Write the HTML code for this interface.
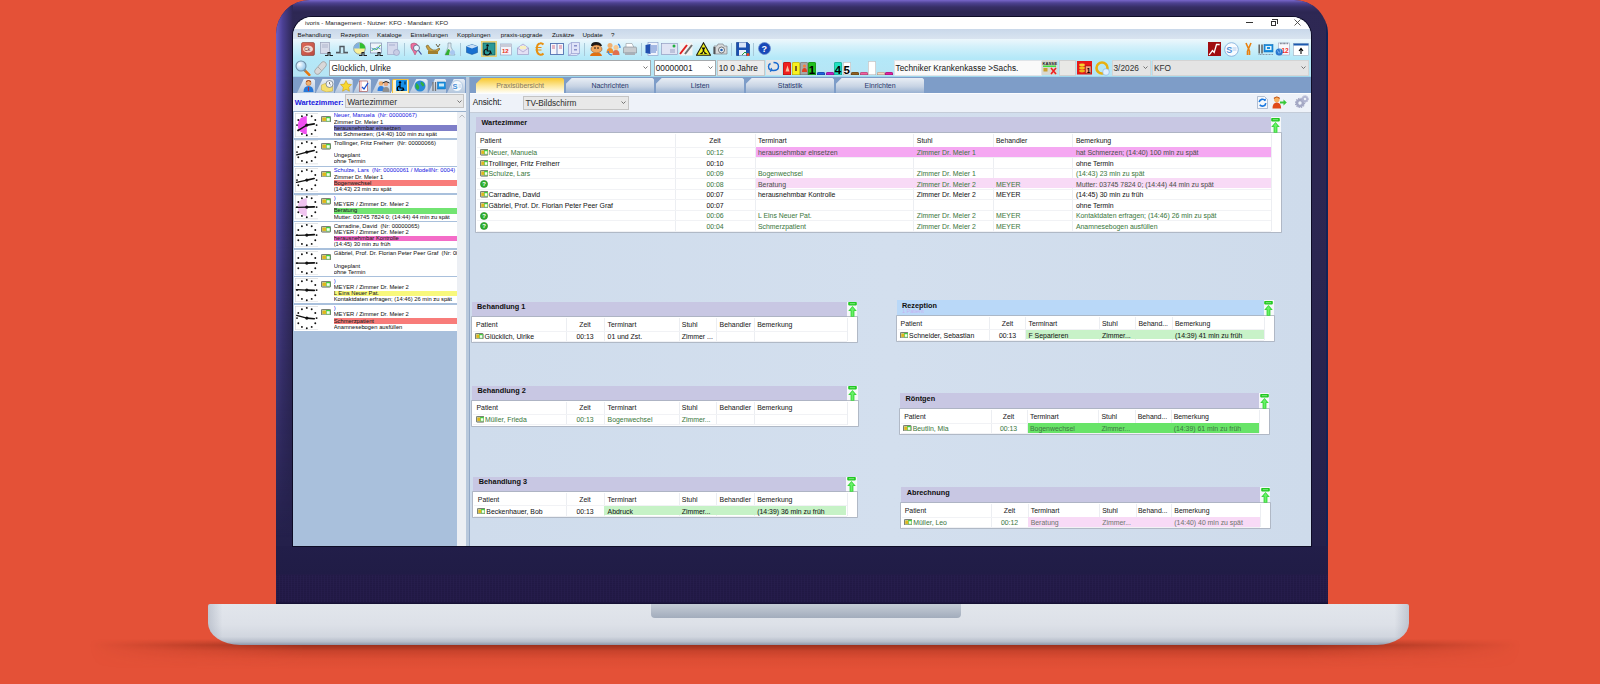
<!DOCTYPE html>
<html><head><meta charset="utf-8"><title>ivoris</title>
<style>*{margin:0;padding:0;box-sizing:border-box}
html,body{width:1600px;height:684px;overflow:hidden;background:#e45137;font-family:"Liberation Sans",sans-serif}
.a{position:absolute}
.t{position:absolute;white-space:pre;-webkit-text-stroke:0.04px currentColor}
#shadow{left:90px;top:639px;width:1430px;height:30px;background:linear-gradient(rgba(105,25,10,0),rgba(105,25,10,.6) 6px,rgba(135,35,18,.3) 12px,rgba(160,45,25,.1) 20px,rgba(0,0,0,0));-webkit-mask-image:linear-gradient(90deg,transparent,#000 15%,#000 85%,transparent)}
#bezel{left:276px;top:0;width:1052px;height:605px;border-radius:34px 34px 0 0;background:linear-gradient(#2e2854,#2b2651 45%,#24204b 90%);overflow:hidden}
#bzl{left:0;top:0;width:17px;height:560px;background:linear-gradient(90deg,#6e5ec6,#4a3f92 40%,#2d2753);-webkit-mask-image:linear-gradient(#000,#000 12%,rgba(0,0,0,.6) 45%,rgba(0,0,0,.2) 78%,transparent 96%)}
#bzt{left:0;top:0;width:1052px;height:14px;background:linear-gradient(#7866ca,#4d4290 3px,#372f66 7px,#2d2753 12px)}
#bzr{right:0;top:0;width:2px;height:560px;background:#122256}
#bezlow{left:276px;top:546px;width:1052px;height:58px;background:linear-gradient(#221e49,#201c46 48%,#241c49 50%,#221a46 96%,#120e30)}
#bztex{left:276px;top:575px;width:1052px;height:27px;opacity:.2;background:repeating-linear-gradient(90deg,rgba(70,50,120,.5) 0 1px,transparent 1px 3px),repeating-linear-gradient(0deg,rgba(20,10,50,.6) 0 1px,transparent 1px 2px)}
#base{left:208px;top:604px;width:1201px;height:41px;border-radius:2px 2px 32px 32px/2px 2px 22px 22px;background:linear-gradient(90deg,rgba(120,130,150,.3),transparent 1.2%,transparent 98.8%,rgba(120,130,150,.3)),linear-gradient(#e2e6ec,#dde1e8 50%,#d1d6df 80%,#b6bdca 92%,#8e97aa)}
#notch{left:651px;top:604px;width:310px;height:14px;border-radius:0 0 4px 4px;background:linear-gradient(#c5ccd6,#a2acbc)}
#screen{left:293px;top:16.8px;width:1018px;height:529.2px;border-radius:19px 19px 0 0;overflow:hidden;background:#cfdcec;box-shadow:0 0 0 1px #0e0c26}
#inner{position:absolute;left:-293px;top:-16.8px;width:1600px;height:684px}
</style></head><body>
<div id="shadow" class="a"></div>
<div id="bezel" class="a"><div id="bzt" class="a"></div><div id="bzl" class="a"></div><div id="bzr" class="a"></div></div>
<div id="bezlow" class="a"></div><div id="bztex" class="a"></div>
<div id="base" class="a"></div>
<div id="notch" class="a"></div>
<div id="screen" class="a"><div id="inner">
<div class="a" style="left:293px;top:16px;width:1018px;height:13px;background:#fff"></div>
<div class="t" style="left:305px;top:20.30px;font-size:6.25px;line-height:6.25px;color:#222;-webkit-text-stroke:0;">ivoris - Management - Nutzer: KFO - Mandant: KFO</div>
<div class="a" style="left:1246px;top:22px;width:7px;height:1px;background:#333"></div>
<div class="a" style="left:1270.5px;top:20.5px;width:5.5px;height:5px;border:1px solid #333;background:#fff"></div>
<div class="a" style="left:1272px;top:19px;width:5.5px;height:5px;border:1px solid #333;border-left:none;border-bottom:none"></div>
<svg class="a" style="left:1294px;top:19px" width="7" height="7"><path d="M0.5 0.5L6.5 6.5M6.5 0.5L0.5 6.5" stroke="#444" stroke-width="0.9"/></svg>
<div class="a" style="left:293px;top:29px;width:1018px;height:10px;background:linear-gradient(#c9d8ea,#d9e4f0)"></div>
<div class="t" style="left:297.5px;top:31.60px;font-size:6.25px;line-height:6.25px;color:#111;-webkit-text-stroke:0;">Behandlung</div>
<div class="t" style="left:340.5px;top:31.60px;font-size:6.25px;line-height:6.25px;color:#111;-webkit-text-stroke:0;">Rezeption</div>
<div class="t" style="left:377px;top:31.60px;font-size:6.25px;line-height:6.25px;color:#111;-webkit-text-stroke:0;">Kataloge</div>
<div class="t" style="left:410.5px;top:31.60px;font-size:6.25px;line-height:6.25px;color:#111;-webkit-text-stroke:0;">Einstellungen</div>
<div class="t" style="left:457px;top:31.60px;font-size:6.25px;line-height:6.25px;color:#111;-webkit-text-stroke:0;">Kopplungen</div>
<div class="t" style="left:500.7px;top:31.60px;font-size:6.25px;line-height:6.25px;color:#111;-webkit-text-stroke:0;">praxis-upgrade</div>
<div class="t" style="left:552px;top:31.60px;font-size:6.25px;line-height:6.25px;color:#111;-webkit-text-stroke:0;">Zusätze</div>
<div class="t" style="left:582.5px;top:31.60px;font-size:6.25px;line-height:6.25px;color:#111;-webkit-text-stroke:0;">Update</div>
<div class="t" style="left:611px;top:31.60px;font-size:6.25px;line-height:6.25px;color:#111;-webkit-text-stroke:0;">?</div>
<div class="a" style="left:293px;top:39px;width:1018px;height:20px;background:linear-gradient(#edf7fc,#d2f0fa 40%,#b2e8f8)"></div>
<svg class="a" style="left:301px;top:42px;" width="14" height="14" viewBox="0 0 14 14"><defs><linearGradient id="g1" x1="0" y1="0" x2="1" y2="1"><stop offset="0" stop-color="#e06a58"/><stop offset="1" stop-color="#b84a40"/></linearGradient></defs><rect x="0.5" y="0.5" width="13" height="13" rx="1.5" fill="url(#g1)" stroke="#8a3a30" stroke-width="0.6"/><ellipse cx="7" cy="7" rx="5" ry="3.6" fill="#f2d8d0"/><text x="3.2" y="9" font-size="5" font-family="Liberation Sans" fill="#6a2a20">Ck</text></svg>
<svg class="a" style="left:320px;top:42px;" width="13" height="14" viewBox="0 0 13 14"><rect x="0.5" y="0.5" width="9" height="11" fill="#d8dcea" stroke="#9aa0b8" stroke-width="0.7"/><line x1="2" y1="3" x2="8" y2="3" stroke="#a0a8c0" stroke-width="0.7"/><line x1="2" y1="5" x2="8" y2="5" stroke="#a0a8c0" stroke-width="0.7"/><path d="M5 13.5h3v-3h2v3h3" fill="none" stroke="#202020" stroke-width="1.1"/></svg>
<svg class="a" style="left:335px;top:43px;" width="14" height="12" viewBox="0 0 14 12"><path d="M1 9.5h4v-6h4v6h4" fill="none" stroke="#505860" stroke-width="1.4"/><path d="M1 10.5h12" stroke="#90989e" stroke-width="0.6"/></svg>
<svg class="a" style="left:353px;top:42px;" width="14" height="14" viewBox="0 0 14 14"><circle cx="6.5" cy="6.5" r="5.8" fill="#f8f098" stroke="#607080" stroke-width="0.6"/><path d="M6.5 6.5V0.7A5.8 5.8 0 0 1 12.3 6.5Z" fill="#30c030"/><path d="M6.5 6.5H0.7A5.8 5.8 0 0 1 6.5 0.7Z" fill="#80b0e0"/><path d="M6 13.5h3v-3h2v3h3" fill="none" stroke="#202020" stroke-width="1.1"/></svg>
<svg class="a" style="left:370px;top:42px;" width="13" height="14" viewBox="0 0 13 14"><rect x="0.5" y="1" width="11" height="10" fill="#eef4fa" stroke="#7888a8" stroke-width="0.7"/><path d="M1.5 9l3-3 2 2 4-5" fill="none" stroke="#30b030" stroke-width="0.9"/><path d="M1.5 6l3 2 3-3 3 2" fill="none" stroke="#3080e0" stroke-width="0.8"/><path d="M5 13.5h3v-3h2v3h3" fill="none" stroke="#202020" stroke-width="1.1"/></svg>
<svg class="a" style="left:387px;top:42px;" width="13" height="14" viewBox="0 0 13 14"><rect x="0.5" y="0.5" width="10" height="12" fill="#d4d8ec" stroke="#a0a8c8" stroke-width="0.7"/><line x1="2" y1="3" x2="8" y2="3" stroke="#a8b0d0"/><circle cx="9.5" cy="10.5" r="3" fill="#c8cce4" stroke="#9098c0" stroke-width="0.6"/></svg>
<div class="a" style="left:404px;top:43px;width:1px;height:13px;background:#a8c8d8"></div>
<svg class="a" style="left:409px;top:42px;" width="13" height="14" viewBox="0 0 13 14"><path d="M2 2q3-2 6 0q2 3 0 7l-2 4-2-4q-3-3-2-7z" fill="#f070a0" stroke="#a04060" stroke-width="0.5"/><circle cx="7.5" cy="6" r="3" fill="#e8f4ff" stroke="#506080" stroke-width="0.8"/><path d="M9.5 8.5l3 4" stroke="#4050a0" stroke-width="1.2"/></svg>
<svg class="a" style="left:425px;top:42px;" width="16" height="14" viewBox="0 0 16 14"><path d="M1 4q2 6 7 7q5 0 7-4l-1-1q-3 3-6 2q-3-1-5-5z" fill="#c8a040" stroke="#705820" stroke-width="0.6"/><path d="M11 2l2 3 2-3" fill="none" stroke="#605030" stroke-width="0.9"/><rect x="3" y="9" width="10" height="3" fill="#a08030"/></svg>
<svg class="a" style="left:444px;top:42px;" width="12" height="14" viewBox="0 0 12 14"><path d="M4 1h3v4l4 8H1l3-8z" fill="#dce8f0" stroke="#7890a0" stroke-width="0.6"/><path d="M2 11l2-4 2 1-1 5H1z" fill="#30b030"/><circle cx="8.5" cy="10.5" r="2.5" fill="#a8c8f0"/></svg>
<div class="a" style="left:460px;top:43px;width:1px;height:13px;background:#a8c8d8"></div>
<svg class="a" style="left:466px;top:43px;" width="12" height="12" viewBox="0 0 12 12"><path d="M0.5 3.5l5.5-2 5.5 2v6l-5.5 2-5.5-2z" fill="#1870d0" stroke="#0a4a90" stroke-width="0.5"/><path d="M0.5 3.5l5.5 2 5.5-2-5.5-2z" fill="#c8e0f8"/></svg>
<svg class="a" style="left:481px;top:41px;" width="16" height="16" viewBox="0 0 16 16"><rect x="0.5" y="0.5" width="15" height="15" fill="#f8e8a0" stroke="#e8c860" stroke-width="0.8"/><rect x="2" y="2" width="12" height="12" fill="#2a9a98" stroke="#106060" stroke-width="0.8"/><circle cx="6.5" cy="4.5" r="1.2" fill="#101010"/><path d="M6.3 6v4h3l1 3M6 8a3 3 0 1 0 3 3.5" fill="none" stroke="#101010" stroke-width="1.2"/></svg>
<svg class="a" style="left:500px;top:42px;" width="12" height="14" viewBox="0 0 12 14"><rect x="0.5" y="2" width="11" height="11" fill="#f4f4fa" stroke="#9098b8" stroke-width="0.6"/><rect x="0.5" y="2" width="11" height="3" fill="#c8ccd8"/><text x="2" y="11" font-size="6" font-weight="bold" font-family="Liberation Sans" fill="#e83020">12</text></svg>
<svg class="a" style="left:517px;top:43px;" width="12" height="12" viewBox="0 0 12 12"><path d="M0.5 5l5.5-4 5.5 4v6.5h-11z" fill="#e4e0f4" stroke="#9890c0" stroke-width="0.6"/><path d="M0.5 5l5.5 4 5.5-4" fill="none" stroke="#9890c0" stroke-width="0.6"/><rect x="3" y="3" width="6" height="3" fill="#f8f0c0"/></svg>
<svg class="a" style="left:535px;top:42px;" width="10" height="14" viewBox="0 0 10 14"><path d="M8.5 2.5q-1.5-1.5-3.2-1.2q-3.5 0.5-3.5 5.7t3.5 5.7q1.7 0.3 3.2-1.2" fill="none" stroke="#e89010" stroke-width="2"/><path d="M0.5 5.5h6M0.5 8h6" stroke="#e89010" stroke-width="1"/></svg>
<svg class="a" style="left:550px;top:42px;" width="14" height="14" viewBox="0 0 14 14"><rect x="0.5" y="1.5" width="13" height="11" fill="#f4f6fc" stroke="#5070b0" stroke-width="0.9"/><line x1="7" y1="1.5" x2="7" y2="12.5" stroke="#5070b0" stroke-width="0.8"/><path d="M2 4h3M2 6h3M9 4h3M9 6h3" stroke="#c02040" stroke-width="0.6"/></svg>
<svg class="a" style="left:568px;top:42px;" width="12" height="14" viewBox="0 0 12 14"><path d="M0.5 2.5l3-2h8v11l-3 2h-8z" fill="#e0e4f8" stroke="#8890c8" stroke-width="0.6"/><path d="M3.5 0.5v11h8M3.5 11.5l-3 2" fill="none" stroke="#8890c8" stroke-width="0.6"/><rect x="6" y="3" width="3" height="1.5" fill="#8890c8"/><rect x="6" y="7" width="3" height="1.5" fill="#8890c8"/></svg>
<div class="a" style="left:584px;top:43px;width:1px;height:13px;background:#a8c8d8"></div>
<svg class="a" style="left:589px;top:42px;" width="14" height="14" viewBox="0 0 14 14"><path d="M2 4q0-4 5-4q5 0 6 4z" fill="#181818"/><ellipse cx="7.5" cy="7" rx="5.5" ry="4" fill="#f0a860" stroke="#804010" stroke-width="0.5"/><path d="M1 14q1-4 6-3q5-1 6 3z" fill="#e07010"/><circle cx="6" cy="6" r="0.8" fill="#000"/><circle cx="9" cy="6" r="0.8" fill="#000"/></svg>
<svg class="a" style="left:606px;top:42px;" width="15" height="14" viewBox="0 0 15 14"><circle cx="4" cy="3.5" r="2.5" fill="#f0b070"/><path d="M0.5 11q0-5 3.5-5q3.5 0 3.5 5z" fill="#f09030"/><circle cx="10" cy="5.5" r="2.5" fill="#f8c890"/><path d="M6.5 13q0-5 3.5-5q3.5 0 3.5 5z" fill="#e07050"/><path d="M2 9a4 4 0 0 0 4 4M12 2a4 4 0 0 1 2 4" fill="none" stroke="#3080e0" stroke-width="1.2"/></svg>
<svg class="a" style="left:623px;top:43px;" width="14" height="13" viewBox="0 0 14 13"><path d="M3 0.5h6l2 4H3z" fill="#fff" stroke="#9098a0" stroke-width="0.6"/><path d="M0.5 5q0-1 1-1h11q1 0 1 1v5h-13z" fill="#c8ccd0" stroke="#808890" stroke-width="0.6"/><rect x="2" y="9" width="10" height="3" fill="#a8b0b8"/></svg>
<div class="a" style="left:641px;top:43px;width:1px;height:13px;background:#a8c8d8"></div>
<svg class="a" style="left:645px;top:42px;" width="14" height="14" viewBox="0 0 14 14"><rect x="3" y="0.5" width="10" height="13" fill="#f0f4fc" stroke="#8098c8" stroke-width="0.6"/><path d="M0.5 3l5-1v10l-5-1z" fill="#2050b0"/><path d="M6 4h6M6 6h6M6 8h6M6 10h5" stroke="#3060c0" stroke-width="0.8"/></svg>
<svg class="a" style="left:661px;top:43px;" width="17" height="12" viewBox="0 0 17 12"><rect x="0.5" y="0.5" width="16" height="11" fill="#e0e4f4" stroke="#8890b8" stroke-width="0.6"/><circle cx="13" cy="3" r="1.5" fill="#20b040"/><path d="M9 7h5M9 9h5" stroke="#8890b8" stroke-width="0.8"/></svg>
<svg class="a" style="left:679px;top:42px;" width="14" height="14" viewBox="0 0 14 14"><rect x="0.5" y="0.5" width="13" height="13" fill="#f4f4f4"/><path d="M1 12L8 3" stroke="#e02020" stroke-width="2"/><path d="M6 12L13 3" stroke="#707070" stroke-width="2"/></svg>
<svg class="a" style="left:696px;top:42px;" width="15" height="14" viewBox="0 0 15 14"><path d="M7.5 0.8L14.5 13.2H0.5z" fill="#f0f020" stroke="#202010" stroke-width="1.1"/><circle cx="7.5" cy="9" r="1" fill="#000"/><path d="M7.5 9L5.5 5.5h4zM7.5 9l4 3h-3zM7.5 9l-4 3h3z" fill="#101010"/></svg>
<svg class="a" style="left:713px;top:42px;" width="15" height="14" viewBox="0 0 15 14"><path d="M1 4h3l1-2h5l1 2h3v8H1z" fill="#d8dadc" stroke="#707478" stroke-width="0.6"/><circle cx="8.5" cy="8" r="3" fill="#f0f4f8" stroke="#505458" stroke-width="0.8"/><circle cx="8.5" cy="8" r="1.3" fill="#2060b0"/><rect x="0.5" y="5" width="2" height="7" fill="#505458"/></svg>
<div class="a" style="left:731px;top:43px;width:1px;height:13px;background:#a8c8d8"></div>
<svg class="a" style="left:736px;top:42px;" width="14" height="14" viewBox="0 0 14 14"><path d="M0.5 0.5h11l2 2v11h-13z" fill="#1a50b0" stroke="#0a3080" stroke-width="0.6"/><rect x="3" y="0.5" width="7" height="5" fill="#d8e4f8"/><rect x="3" y="8" width="7" height="5.5" fill="#e8eef8"/><path d="M6 13l3-3 3 3" fill="none" stroke="#20a040" stroke-width="1"/><circle cx="12" cy="12.5" r="1.5" fill="#f04020"/></svg>
<div class="a" style="left:753px;top:43px;width:1px;height:13px;background:#a8c8d8"></div>
<svg class="a" style="left:758px;top:42px;" width="13" height="13" viewBox="0 0 13 13"><circle cx="6.5" cy="6.5" r="6" fill="#1848b8" stroke="#7090d0" stroke-width="0.8"/><text x="3.6" y="10" font-size="9" font-weight="bold" font-family="Liberation Sans" fill="#fff">?</text></svg>
<svg class="a" style="left:1208px;top:42px;" width="14" height="14" viewBox="0 0 14 14"><rect x="0" y="0" width="13" height="14" fill="#a00c10"/><path d="M1.2 12.8L4.5 8.5 6.2 10.5 8.5 2.5h3.2" fill="none" stroke="#fff" stroke-width="1.3"/></svg>
<svg class="a" style="left:1224px;top:42px;" width="15" height="15" viewBox="0 0 15 15"><circle cx="7.5" cy="7.5" r="6.8" fill="#f8fbff" stroke="#7aa8d8" stroke-width="0.8"/><text x="2.3" y="11" font-size="9" font-weight="bold" font-family="Liberation Sans" fill="#5090d8">S</text><path d="M8.5 6h4M8.5 8h4" stroke="#a0c0e8" stroke-width="0.8"/></svg>
<svg class="a" style="left:1244px;top:42px;" width="9" height="14" viewBox="0 0 9 14"><path d="M2 1l3.5 8M7 1L3.5 9" stroke="#e88010" stroke-width="1.6"/><path d="M3.5 9v4M5.5 9v4" stroke="#e88010" stroke-width="1.6"/></svg>
<svg class="a" style="left:1258px;top:43px;" width="16" height="13" viewBox="0 0 16 13"><path d="M1.2 1.5v9M4 1.5v9" stroke="#606060" stroke-width="1.5"/><rect x="6" y="1.5" width="9" height="7.5" fill="#1a90e0" stroke="#0a60b0" stroke-width="0.5"/><rect x="7.5" y="3" width="6" height="4" fill="#e0f0fa"/><rect x="9" y="4" width="3" height="2" fill="#1a90e0"/><path d="M0.5 11.5h15" stroke="#8090a0" stroke-width="0.9" stroke-dasharray="1 0.5"/></svg>
<svg class="a" style="left:1275px;top:42px;" width="15" height="14" viewBox="0 0 15 14"><rect x="3.5" y="1" width="11" height="12" fill="#f8f8fc" stroke="#a0a4b8" stroke-width="0.6"/><path d="M5 1.5h8" stroke="#707888" stroke-width="1.4" stroke-dasharray="0.8 0.6"/><text x="6.5" y="10.5" font-size="6.5" font-weight="bold" font-family="Liberation Sans" fill="#f03020">12</text><circle cx="4.2" cy="10" r="3.6" fill="#2a78d0"/><path d="M2 8.5q2 1 2 3M5 7q1 2 0 4" fill="none" stroke="#a0d0f8" stroke-width="0.7"/></svg>
<svg class="a" style="left:1293px;top:43px;" width="16" height="13" viewBox="0 0 16 13"><rect x="0.5" y="0.5" width="15" height="12" fill="#fff" stroke="#a0b0c0" stroke-width="0.6"/><rect x="0.5" y="0.5" width="15" height="2" fill="#1a5ab0"/><path d="M8 11V6M6 8l2-2.5 2 2.5" fill="none" stroke="#000" stroke-width="1.1"/></svg>
<div class="a" style="left:293px;top:58.5px;width:1018px;height:18.5px;background:linear-gradient(#b4e8f8,#b6e4f4)"></div>
<div class="a" style="left:293px;top:76px;width:1018px;height:1.2px;background:#9fd6ec"></div>
<svg class="a" style="left:295px;top:60px;" width="16" height="16" viewBox="0 0 16 16"><defs><radialGradient id="mg" cx="0.35" cy="0.35" r="0.7"><stop offset="0" stop-color="#ffffff"/><stop offset="1" stop-color="#8cc4ec"/></radialGradient></defs><path d="M9.3 9.8l5 5" stroke="#e8780c" stroke-width="2.6" stroke-linecap="round"/><path d="M9 9.5l1.6 1.6" stroke="#808890" stroke-width="2.2"/><circle cx="6" cy="6" r="5" fill="url(#mg)" stroke="#7090a8" stroke-width="1.1"/></svg>
<svg class="a" style="left:313px;top:60px;" width="15" height="15" viewBox="0 0 15 15"><path d="M2 10l7-8q2-1 3.5 0.5t0.5 3.5l-7 8q-2 1-3.5-0.5T2 10z" fill="#d8d8d8" stroke="#a0a0a0" stroke-width="0.8"/><path d="M5 7l3.5 3.5" stroke="#a0a0a0" stroke-width="0.8"/></svg>
<div class="a" style="left:329px;top:60px;width:322px;height:15.5px;background:#fff;border:1px solid #a4a8ac"></div>
<svg class="a" style="left:643px;top:66.25px;" width="5" height="3" viewBox="0 0 5 3"><path d="M0.5 0.5L2.5 2.5L4.5 0.5" fill="none" stroke="#555" stroke-width="0.8"/></svg>
<div class="t" style="left:331.5px;top:63.80px;font-size:8.3px;line-height:8.3px;color:#222;">Glücklich, Ulrike</div>
<div class="a" style="left:654px;top:60px;width:62px;height:15.5px;background:#fff;border:1px solid #a4a8ac"></div>
<svg class="a" style="left:708px;top:66.25px;" width="5" height="3" viewBox="0 0 5 3"><path d="M0.5 0.5L2.5 2.5L4.5 0.5" fill="none" stroke="#555" stroke-width="0.8"/></svg>
<div class="t" style="left:655.7px;top:63.80px;font-size:8.3px;line-height:8.3px;color:#222;">00000001</div>
<div class="a" style="left:717px;top:60px;width:48px;height:15.5px;background:#ececec;border:1px solid #c8c8c8"></div>
<div class="t" style="left:718.7px;top:63.80px;font-size:8.3px;line-height:8.3px;color:#222;">10 0 Jahre</div>
<div class="a" style="left:765.5px;top:59.5px;width:16px;height:15.5px;background:#e6e6e6"></div>
<svg class="a" style="left:767px;top:61px;" width="13" height="12" viewBox="0 0 13 12"><path d="M6.5 1.5q5 0 5 4t-5 4q-5 0-5-4 0-2 2-3" fill="none" stroke="#1a6ad0" stroke-width="1.4"/><path d="M3 10.5l2-1.5-1-2" fill="none" stroke="#1a6ad0" stroke-width="1.2"/></svg>
<div class="a" style="left:783px;top:62px;width:8px;height:12.8px;background:#f02020;border-radius:1.5px 1.5px 0 0;box-shadow:inset 0 0 0 0.5px rgba(0,0,0,.35)"></div>
<div class="a" style="left:792px;top:62px;width:7.5px;height:12.8px;background:#f8f020;border-radius:1.5px 1.5px 0 0;box-shadow:inset 0 0 0 0.5px rgba(0,0,0,.35)"></div>
<div class="a" style="left:800px;top:62px;width:7.5px;height:12.8px;background:#a8a8a8;border-radius:1.5px 1.5px 0 0;box-shadow:inset 0 0 0 0.5px rgba(0,0,0,.35)"></div>
<div class="a" style="left:808px;top:62px;width:8px;height:12.8px;background:#20c020;border-radius:1.5px 1.5px 0 0;box-shadow:inset 0 0 0 0.5px rgba(0,0,0,.35)"></div>
<div class="t" style="left:808px;width:8px;text-align:center;top:65.20px;font-size:11.5px;line-height:11.5px;font-weight:bold;color:#000">1</div>
<div class="a" style="left:817px;top:72px;width:8px;height:2.8px;background:#2060e0;border-radius:1.5px 1.5px 0 0;box-shadow:inset 0 0 0 0.5px rgba(0,0,0,.35)"></div>
<div class="a" style="left:826px;top:72px;width:7.5px;height:2.8px;background:#c020c0;border-radius:1.5px 1.5px 0 0;box-shadow:inset 0 0 0 0.5px rgba(0,0,0,.35)"></div>
<div class="a" style="left:834px;top:62px;width:8px;height:12.8px;background:#20e0c0;border-radius:1.5px 1.5px 0 0;box-shadow:inset 0 0 0 0.5px rgba(0,0,0,.35)"></div>
<div class="t" style="left:834px;width:8px;text-align:center;top:65.20px;font-size:11.5px;line-height:11.5px;font-weight:bold;color:#000">4</div>
<div class="a" style="left:843px;top:62px;width:7.5px;height:12.8px;background:#ffffff;border-radius:1.5px 1.5px 0 0;box-shadow:inset 0 0 0 0.5px rgba(0,0,0,.35)"></div>
<div class="t" style="left:843px;width:7.5px;text-align:center;top:65.20px;font-size:11.5px;line-height:11.5px;font-weight:bold;color:#000">5</div>
<div class="a" style="left:851px;top:72px;width:8px;height:2.8px;background:#906020;border-radius:1.5px 1.5px 0 0;box-shadow:inset 0 0 0 0.5px rgba(0,0,0,.35)"></div>
<div class="a" style="left:860px;top:72px;width:7.5px;height:2.8px;background:#f060a0;border-radius:1.5px 1.5px 0 0;box-shadow:inset 0 0 0 0.5px rgba(0,0,0,.35)"></div>
<div class="a" style="left:868px;top:61px;width:7.5px;height:13.8px;background:#ffffff;border-radius:1.5px 1.5px 0 0;box-shadow:inset 0 0 0 0.5px rgba(0,0,0,.35)"></div>
<div class="a" style="left:877px;top:72px;width:7.5px;height:2.8px;background:#f8d8c0;border-radius:1.5px 1.5px 0 0;box-shadow:inset 0 0 0 0.5px rgba(0,0,0,.35)"></div>
<div class="a" style="left:885px;top:72px;width:8px;height:2.8px;background:#e020a0;border-radius:1.5px 1.5px 0 0;box-shadow:inset 0 0 0 0.5px rgba(0,0,0,.35)"></div>
<svg class="a" style="left:785px;top:65px;" width="5" height="7" viewBox="0 0 5 7"><path d="M2.5 0.5L0.5 6.5h4z" fill="#f8c0a0"/></svg>
<svg class="a" style="left:794px;top:65px;" width="4" height="7" viewBox="0 0 4 7"><rect x="1" y="1" width="2" height="5" fill="#806020"/></svg>
<svg class="a" style="left:801.5px;top:64px;" width="5" height="8" viewBox="0 0 5 8"><circle cx="2.5" cy="2" r="1.6" fill="#f08040"/><path d="M0 8q0-4 2.5-4t2.5 4z" fill="#e04020"/></svg>
<div class="a" style="left:893.5px;top:59.5px;width:148px;height:16px;background:#fafafa;border:1px solid #e0e4e8"></div>
<div class="t" style="left:895.5px;top:63.80px;font-size:8.3px;line-height:8.3px;color:#222;">Techniker Krankenkasse &gt;Sachs.</div>
<svg class="a" style="left:1042px;top:60px;" width="16" height="15" viewBox="0 0 16 15"><rect x="0" y="0" width="15.5" height="15" fill="#d8d8d0"/><text x="0.5" y="4.5" font-size="4.2" font-weight="bold" font-family="Liberation Sans" fill="#222">KASSE</text><rect x="1" y="5.5" width="13" height="1.5" fill="#40e040"/><rect x="1.5" y="8" width="4" height="3.5" fill="#c8a030"/><path d="M9 8l5 6M14 8l-5 6" stroke="#f02020" stroke-width="1.6"/></svg>
<div class="a" style="left:1059px;top:59.5px;width:16.5px;height:16px;background:#e8e8e6;border:0.5px solid #d0d0d0"></div>
<svg class="a" style="left:1077px;top:61px;" width="15" height="14" viewBox="0 0 15 14"><rect x="0" y="0" width="15" height="13.5" fill="#e81818"/><ellipse cx="5" cy="4" rx="3" ry="1.4" fill="#f8d030"/><ellipse cx="5" cy="7" rx="3" ry="1.4" fill="#f0c020"/><ellipse cx="5" cy="10" rx="3" ry="1.4" fill="#e8b818"/><rect x="8.5" y="5" width="5.5" height="7.5" fill="#f8a080" stroke="#601010" stroke-width="0.4"/><text x="9.6" y="11.8" font-size="7" font-weight="bold" font-family="Liberation Sans" fill="#000">1</text></svg>
<svg class="a" style="left:1095px;top:61px;" width="16" height="15" viewBox="0 0 16 15"><circle cx="7" cy="7" r="5.5" fill="none" stroke="#e8b010" stroke-width="2.6"/><circle cx="11" cy="11" r="3.3" fill="#e0f0ff" stroke="#80b0e0" stroke-width="0.6"/></svg>
<div class="a" style="left:1112px;top:60px;width:39px;height:15.5px;background:#e4e4e4;border:1px solid #d4d4d4"></div>
<svg class="a" style="left:1143px;top:66.25px;" width="5" height="3" viewBox="0 0 5 3"><path d="M0.5 0.5L2.5 2.5L4.5 0.5" fill="none" stroke="#555" stroke-width="0.8"/></svg>
<div class="t" style="left:1113.5px;top:63.80px;font-size:8.3px;line-height:8.3px;color:#333;">3/2026</div>
<div class="a" style="left:1152px;top:60px;width:157px;height:15.5px;background:#e4e4e4;border:1px solid #d4d4d4"></div>
<svg class="a" style="left:1301px;top:66.25px;" width="5" height="3" viewBox="0 0 5 3"><path d="M0.5 0.5L2.5 2.5L4.5 0.5" fill="none" stroke="#555" stroke-width="0.8"/></svg>
<div class="t" style="left:1154px;top:63.80px;font-size:8.3px;line-height:8.3px;color:#333;">KFO</div>
<div class="a" style="left:293px;top:77px;width:1018px;height:16px;background:#7e9dc8"></div>
<div class="a" style="left:466px;top:77px;width:4px;height:469px;background:#b8c8dc"></div>
<div class="a" style="left:469.3px;top:77px;width:0.8px;height:469px;background:#94aac8"></div>
<div class="a" style="left:297px;top:78.5px;width:18.2px;height:14.5px;background:linear-gradient(#e8eef6,#b4c6dc);clip-path:polygon(0 100%,7px 0,calc(100% - 2px) 0,100% 2px,100% 100%);"></div>
<div class="a" style="left:315.75px;top:78.5px;width:18.2px;height:14.5px;background:linear-gradient(#e8eef6,#b4c6dc);clip-path:polygon(0 100%,7px 0,calc(100% - 2px) 0,100% 2px,100% 100%);"></div>
<div class="a" style="left:334.5px;top:78.5px;width:18.2px;height:14.5px;background:linear-gradient(#e8eef6,#b4c6dc);clip-path:polygon(0 100%,7px 0,calc(100% - 2px) 0,100% 2px,100% 100%);"></div>
<div class="a" style="left:353.25px;top:78.5px;width:18.2px;height:14.5px;background:linear-gradient(#e8eef6,#b4c6dc);clip-path:polygon(0 100%,7px 0,calc(100% - 2px) 0,100% 2px,100% 100%);"></div>
<div class="a" style="left:372px;top:78.5px;width:18.2px;height:14.5px;background:linear-gradient(#e8eef6,#b4c6dc);clip-path:polygon(0 100%,7px 0,calc(100% - 2px) 0,100% 2px,100% 100%);"></div>
<div class="a" style="left:390.75px;top:78.5px;width:18.2px;height:14.5px;background:linear-gradient(#fde8a8,#fff8e0);clip-path:polygon(0 100%,7px 0,calc(100% - 2px) 0,100% 2px,100% 100%);"></div>
<div class="a" style="left:409.5px;top:78.5px;width:18.2px;height:14.5px;background:linear-gradient(#e8eef6,#b4c6dc);clip-path:polygon(0 100%,7px 0,calc(100% - 2px) 0,100% 2px,100% 100%);"></div>
<div class="a" style="left:428.25px;top:78.5px;width:18.2px;height:14.5px;background:linear-gradient(#e8eef6,#b4c6dc);clip-path:polygon(0 100%,7px 0,calc(100% - 2px) 0,100% 2px,100% 100%);"></div>
<div class="a" style="left:447px;top:78.5px;width:18.2px;height:14.5px;background:linear-gradient(#e8eef6,#b4c6dc);clip-path:polygon(0 100%,7px 0,calc(100% - 2px) 0,100% 2px,100% 100%);"></div>
<div class="a" style="left:475.7px;top:78px;width:88.8px;height:15px;background:linear-gradient(#f8c830,#fde9a0 55%,#fffdf4);clip-path:polygon(0 100%,0 6px,6px 0,calc(100% - 2px) 0,100% 2px,100% 100%);"></div>
<div class="t" style="left:475.7px;width:88.8px;text-align:center;top:81.90px;font-size:7px;line-height:7px;color:#8a7c62">Praxisübersicht</div>
<div class="a" style="left:565.7px;top:78px;width:88.8px;height:15px;background:linear-gradient(#e9eef5,#c8d4e4 55%,#9ab2d2);clip-path:polygon(0 100%,0 6px,6px 0,calc(100% - 2px) 0,100% 2px,100% 100%);"></div>
<div class="t" style="left:565.7px;width:88.8px;text-align:center;top:81.90px;font-size:7px;line-height:7px;color:#2c3c70">Nachrichten</div>
<div class="a" style="left:655.7px;top:78px;width:88.8px;height:15px;background:linear-gradient(#e9eef5,#c8d4e4 55%,#9ab2d2);clip-path:polygon(0 100%,0 6px,6px 0,calc(100% - 2px) 0,100% 2px,100% 100%);"></div>
<div class="t" style="left:655.7px;width:88.8px;text-align:center;top:81.90px;font-size:7px;line-height:7px;color:#2c3c70">Listen</div>
<div class="a" style="left:745.7px;top:78px;width:88.8px;height:15px;background:linear-gradient(#e9eef5,#c8d4e4 55%,#9ab2d2);clip-path:polygon(0 100%,0 6px,6px 0,calc(100% - 2px) 0,100% 2px,100% 100%);"></div>
<div class="t" style="left:745.7px;width:88.8px;text-align:center;top:81.90px;font-size:7px;line-height:7px;color:#2c3c70">Statistik</div>
<div class="a" style="left:835.7px;top:78px;width:88.8px;height:15px;background:linear-gradient(#e9eef5,#c8d4e4 55%,#9ab2d2);clip-path:polygon(0 100%,0 6px,6px 0,calc(100% - 2px) 0,100% 2px,100% 100%);"></div>
<div class="t" style="left:835.7px;width:88.8px;text-align:center;top:81.90px;font-size:7px;line-height:7px;color:#2c3c70">Einrichten</div>
<svg class="a" style="left:303px;top:80px;" width="11" height="12" viewBox="0 0 11 12"><circle cx="5.5" cy="3" r="2.6" fill="#f0b070" stroke="#a05020" stroke-width="0.4"/><path d="M3 1.5q2.5-2 5 0" fill="none" stroke="#a04010" stroke-width="1"/><path d="M0.5 12q0-6 5-6t5 6z" fill="#2878d8"/><path d="M5.5 7v4" stroke="#d02020" stroke-width="0.8"/></svg>
<svg class="a" style="left:321px;top:80px;" width="13" height="12" viewBox="0 0 13 12"><path d="M0.5 5l5-2 6 3v5l-6 1-5-2z" fill="#f4e070" stroke="#c8a830" stroke-width="0.5"/><circle cx="8.5" cy="4" r="3.5" fill="#f4f4f4" stroke="#607080" stroke-width="0.7"/><path d="M8.5 2v2l1.2 1" fill="none" stroke="#333" stroke-width="0.6"/></svg>
<svg class="a" style="left:340px;top:80px;" width="12" height="12" viewBox="0 0 12 12"><path d="M6 0.5l1.7 3.6 3.8 0.5-2.8 2.7 0.7 3.9L6 9.3l-3.4 1.9 0.7-3.9L0.5 4.6l3.8-0.5z" fill="#f8d830" stroke="#d0a010" stroke-width="0.6"/></svg>
<svg class="a" style="left:359px;top:80px;" width="10" height="12" viewBox="0 0 10 12"><rect x="0.5" y="1" width="8" height="10.5" fill="#fff" stroke="#a04040" stroke-width="0.6"/><path d="M2 1v10" stroke="#e06060" stroke-width="0.6"/><path d="M3 7l2 2 4-6" fill="none" stroke="#1850d0" stroke-width="1.3"/></svg>
<svg class="a" style="left:377px;top:80px;" width="13" height="12" viewBox="0 0 13 12"><circle cx="4" cy="3.5" r="2.3" fill="#f0b070"/><path d="M0.5 11q0-5 3.5-5t3.5 5z" fill="#3080e0"/><circle cx="9" cy="4" r="2.3" fill="#e8a880"/><path d="M5.5 3q3.5-3 7 0" fill="none" stroke="#202020" stroke-width="1"/><path d="M5.5 12q0-5 3.5-5t3.5 5z" fill="#909090"/></svg>
<div class="a" style="left:392px;top:78.5px;width:16.5px;height:14.5px;background:#fff3c8;border:1px solid #f0c040;border-bottom:none;border-radius:2px 2px 0 0"></div>
<svg class="a" style="left:395.5px;top:79.5px;" width="11.5" height="11.5" viewBox="0 0 11.5 11.5"><rect x="0" y="0" width="11.5" height="11.5" rx="1" fill="#1890e8"/><circle cx="4" cy="2.5" r="1.2" fill="#000"/><path d="M4 4v4h3l1 2.5M3.8 6a2.7 2.7 0 1 0 2.8 3.5" fill="none" stroke="#000" stroke-width="1.2"/><path d="M9 1.5v3" stroke="#000" stroke-width="0.8"/></svg>
<svg class="a" style="left:414px;top:80px;" width="12" height="12" viewBox="0 0 12 12"><circle cx="6" cy="6" r="5.5" fill="#2a8ad8"/><path d="M2 3q2 1 3 3t-1 4q-2-1-2.5-3zM7 1.5q3 1 3.5 4l-2 1-2-3z" fill="#30b040"/></svg>
<svg class="a" style="left:431.5px;top:80.5px;" width="14" height="11" viewBox="0 0 14 11"><path d="M1 1v9M3.5 1v9" stroke="#707070" stroke-width="1.2"/><rect x="5.5" y="1" width="8" height="7" fill="#1890e0" stroke="#0a60b0" stroke-width="0.5"/><rect x="7" y="2.5" width="5" height="3" fill="#c8e8f8"/></svg>
<svg class="a" style="left:451px;top:80px;" width="12" height="12" viewBox="0 0 12 12"><circle cx="6" cy="6" r="5.5" fill="#f4f8fc" stroke="#a8c4e0" stroke-width="0.8"/><text x="1.5" y="9" font-size="7.5" font-weight="bold" font-family="Liberation Sans" fill="#4a90d8">S</text><path d="M7.5 5h3M7.5 7h3" stroke="#a0c0e8" stroke-width="0.7"/></svg>
<div class="a" style="left:293px;top:93px;width:173px;height:18px;background:#eef3f9"></div>
<div class="a" style="left:293px;top:111px;width:173px;height:1px;background:#98b0cc"></div>
<div class="t" style="left:294.7px;top:98.90px;font-size:7.45px;line-height:7.45px;color:#1c1ce0;font-weight:bold;">Wartezimmer:</div>
<div class="a" style="left:345.2px;top:94.2px;width:119.3px;height:14.2px;background:#e8e8e8;border:1px solid #c4c4c4"></div>
<svg class="a" style="left:456.5px;top:99.8px;" width="5" height="3" viewBox="0 0 5 3"><path d="M0.5 0.5L2.5 2.5L4.5 0.5" fill="none" stroke="#555" stroke-width="0.8"/></svg>
<div class="t" style="left:347.2px;top:97.90px;font-size:8.45px;line-height:8.45px;color:#333;">Wartezimmer</div>
<div class="a" style="left:293px;top:112px;width:164px;height:434px;background:#a9c0dc"></div>
<div class="a" style="left:457px;top:112px;width:9px;height:434px;background:#eceff4"></div>
<svg class="a" style="left:458.5px;top:114px;" width="6" height="4" viewBox="0 0 6 4"><path d="M0.5 3.5L3 1l2.5 2.5" fill="none" stroke="#a0a4a8" stroke-width="0.7"/></svg>
<div class="a" style="left:294px;top:112.00px;width:162.5px;height:26px;background:#fff;overflow:hidden">

</div>
<svg class="a" style="left:294.5px;top:112.8px;" width="23.6" height="24.2" viewBox="0 0 23.6 24.2"><rect x="0.3" y="0.3" width="23.0" height="23.599999999999998" fill="#fff" stroke="#d0d4d8" stroke-width="0.6"/><path d="M11.8 2.9000000000000004A9.2 9.2 0 0 0 11.8 21.299999999999997Z" fill="#f050f0"/><circle cx="11.80" cy="1.90" r="0.95" fill="#111"/><circle cx="16.70" cy="3.27" r="0.95" fill="#111"/><circle cx="20.29" cy="7.00" r="0.95" fill="#111"/><circle cx="21.60" cy="12.10" r="0.95" fill="#111"/><circle cx="20.29" cy="17.20" r="0.95" fill="#111"/><circle cx="16.70" cy="20.93" r="0.95" fill="#111"/><circle cx="11.80" cy="22.30" r="0.95" fill="#111"/><circle cx="6.90" cy="20.93" r="0.95" fill="#111"/><circle cx="3.31" cy="17.20" r="0.95" fill="#111"/><circle cx="2.00" cy="12.10" r="0.95" fill="#111"/><circle cx="3.31" cy="7.00" r="0.95" fill="#111"/><circle cx="6.90" cy="3.27" r="0.95" fill="#111"/><line x1="11.8" y1="12.1" x2="19.21" y2="10.93" stroke="#111" stroke-width="1.7" stroke-linecap="round"/><line x1="11.8" y1="12.1" x2="2.90" y2="17.66" stroke="#111" stroke-width="1.3" stroke-linecap="round"/><circle cx="11.8" cy="12.1" r="1.6" fill="#111"/></svg>
<svg class="a" style="left:321px;top:115.8px;" width="10" height="6.5" viewBox="0 0 10 6.5"><rect x="0.4" y="0.4" width="9.2" height="5.7" rx="0.8" fill="#c8d0b8" stroke="#505848" stroke-width="0.8"/><rect x="1.4" y="1.6" width="4.0" height="3.3" fill="#e0b818"/><rect x="5.5" y="1.4" width="3.5" height="3.7" fill="#f4fff0" stroke="#40c040" stroke-width="0.5"/><rect x="5.5" y="1.2" width="3.5" height="1" fill="#30d030"/></svg>
<div class="a" style="left:333.5px;top:125.3px;width:123px;height:5.8px;background:#7e7ec8"></div>
<div class="t" style="left:333.7px;top:113.30px;font-size:5.8px;line-height:5.8px;color:#2a2ae6;width:123px;overflow:hidden">Neuer, Manuela  (Nr: 00000067)</div>
<div class="t" style="left:333.7px;top:119.50px;font-size:5.8px;line-height:5.8px;color:#222;width:123px;overflow:hidden">Zimmer Dr. Meier 1</div>
<div class="t" style="left:333.7px;top:125.70px;font-size:5.8px;line-height:5.8px;color:#222;width:123px;overflow:hidden">herausnehmbar einsetzen</div>
<div class="t" style="left:333.7px;top:131.90px;font-size:5.8px;line-height:5.8px;color:#222;width:123px;overflow:hidden">hat Schmerzen; (14:40) 100 min zu spät</div>
<div class="a" style="left:294px;top:139.56px;width:162.5px;height:26px;background:#fff;overflow:hidden">

</div>
<svg class="a" style="left:294.5px;top:140.36px;" width="23.6" height="24.2" viewBox="0 0 23.6 24.2"><rect x="0.3" y="0.3" width="23.0" height="23.599999999999998" fill="#fff" stroke="#d0d4d8" stroke-width="0.6"/><circle cx="11.80" cy="1.90" r="0.95" fill="#111"/><circle cx="16.70" cy="3.27" r="0.95" fill="#111"/><circle cx="20.29" cy="7.00" r="0.95" fill="#111"/><circle cx="21.60" cy="12.10" r="0.95" fill="#111"/><circle cx="20.29" cy="17.20" r="0.95" fill="#111"/><circle cx="16.70" cy="20.93" r="0.95" fill="#111"/><circle cx="11.80" cy="22.30" r="0.95" fill="#111"/><circle cx="6.90" cy="20.93" r="0.95" fill="#111"/><circle cx="3.31" cy="17.20" r="0.95" fill="#111"/><circle cx="2.00" cy="12.10" r="0.95" fill="#111"/><circle cx="3.31" cy="7.00" r="0.95" fill="#111"/><circle cx="6.90" cy="3.27" r="0.95" fill="#111"/><line x1="11.8" y1="12.1" x2="19.14" y2="10.54" stroke="#111" stroke-width="1.7" stroke-linecap="round"/><line x1="11.8" y1="12.1" x2="1.66" y2="14.82" stroke="#111" stroke-width="1.3" stroke-linecap="round"/><circle cx="11.8" cy="12.1" r="1.6" fill="#111"/></svg>
<svg class="a" style="left:321px;top:143.36px;" width="10" height="6.5" viewBox="0 0 10 6.5"><rect x="0.4" y="0.4" width="9.2" height="5.7" rx="0.8" fill="#c8d0b8" stroke="#505848" stroke-width="0.8"/><rect x="1.4" y="1.6" width="4.0" height="3.3" fill="#e0b818"/><rect x="5.5" y="1.4" width="3.5" height="3.7" fill="#f4fff0" stroke="#40c040" stroke-width="0.5"/><rect x="5.5" y="1.2" width="3.5" height="1" fill="#30d030"/></svg>
<div class="t" style="left:333.7px;top:140.86px;font-size:5.8px;line-height:5.8px;color:#222;width:123px;overflow:hidden">Trollinger, Fritz Freiherr  (Nr: 00000066)</div>
<div class="t" style="left:333.7px;top:153.26px;font-size:5.8px;line-height:5.8px;color:#222;width:123px;overflow:hidden">Ungeplant</div>
<div class="t" style="left:333.7px;top:159.46px;font-size:5.8px;line-height:5.8px;color:#222;width:123px;overflow:hidden">ohne Termin</div>
<div class="a" style="left:294px;top:167.12px;width:162.5px;height:26px;background:#fff;overflow:hidden">

</div>
<svg class="a" style="left:294.5px;top:167.92px;" width="23.6" height="24.2" viewBox="0 0 23.6 24.2"><rect x="0.3" y="0.3" width="23.0" height="23.599999999999998" fill="#fff" stroke="#d0d4d8" stroke-width="0.6"/><circle cx="11.80" cy="1.90" r="0.95" fill="#111"/><circle cx="16.70" cy="3.27" r="0.95" fill="#111"/><circle cx="20.29" cy="7.00" r="0.95" fill="#111"/><circle cx="21.60" cy="12.10" r="0.95" fill="#111"/><circle cx="20.29" cy="17.20" r="0.95" fill="#111"/><circle cx="16.70" cy="20.93" r="0.95" fill="#111"/><circle cx="11.80" cy="22.30" r="0.95" fill="#111"/><circle cx="6.90" cy="20.93" r="0.95" fill="#111"/><circle cx="3.31" cy="17.20" r="0.95" fill="#111"/><circle cx="2.00" cy="12.10" r="0.95" fill="#111"/><circle cx="3.31" cy="7.00" r="0.95" fill="#111"/><circle cx="6.90" cy="3.27" r="0.95" fill="#111"/><line x1="11.8" y1="12.1" x2="19.14" y2="10.54" stroke="#111" stroke-width="1.7" stroke-linecap="round"/><line x1="11.8" y1="12.1" x2="1.53" y2="14.28" stroke="#111" stroke-width="1.3" stroke-linecap="round"/><circle cx="11.8" cy="12.1" r="1.6" fill="#111"/></svg>
<svg class="a" style="left:321px;top:170.92px;" width="10" height="6.5" viewBox="0 0 10 6.5"><rect x="0.4" y="0.4" width="9.2" height="5.7" rx="0.8" fill="#c8d0b8" stroke="#505848" stroke-width="0.8"/><rect x="1.4" y="1.6" width="4.0" height="3.3" fill="#e0b818"/><rect x="5.5" y="1.4" width="3.5" height="3.7" fill="#f4fff0" stroke="#40c040" stroke-width="0.5"/><rect x="5.5" y="1.2" width="3.5" height="1" fill="#30d030"/></svg>
<div class="a" style="left:333.5px;top:180.42px;width:123px;height:5.8px;background:#f87c7a"></div>
<div class="t" style="left:333.7px;top:168.42px;font-size:5.8px;line-height:5.8px;color:#2a2ae6;width:123px;overflow:hidden">Schulze, Lars  (Nr: 00000061 / ModellNr: 0004)</div>
<div class="t" style="left:333.7px;top:174.62px;font-size:5.8px;line-height:5.8px;color:#222;width:123px;overflow:hidden">Zimmer Dr. Meier 1</div>
<div class="t" style="left:333.7px;top:180.82px;font-size:5.8px;line-height:5.8px;color:#222;width:123px;overflow:hidden">Bogenwechsel</div>
<div class="t" style="left:333.7px;top:187.02px;font-size:5.8px;line-height:5.8px;color:#222;width:123px;overflow:hidden">(14:43) 23 min zu spät</div>
<div class="a" style="left:294px;top:194.68px;width:162.5px;height:26px;background:#fff;overflow:hidden">

</div>
<svg class="a" style="left:294.5px;top:195.48px;" width="23.6" height="24.2" viewBox="0 0 23.6 24.2"><rect x="0.3" y="0.3" width="23.0" height="23.599999999999998" fill="#fff" stroke="#d0d4d8" stroke-width="0.6"/><path d="M11.8 2.9000000000000004A9.2 9.2 0 0 0 11.8 21.299999999999997Z" fill="#f0c4f0"/><circle cx="11.80" cy="1.90" r="0.95" fill="#111"/><circle cx="16.70" cy="3.27" r="0.95" fill="#111"/><circle cx="20.29" cy="7.00" r="0.95" fill="#111"/><circle cx="21.60" cy="12.10" r="0.95" fill="#111"/><circle cx="20.29" cy="17.20" r="0.95" fill="#111"/><circle cx="16.70" cy="20.93" r="0.95" fill="#111"/><circle cx="11.80" cy="22.30" r="0.95" fill="#111"/><circle cx="6.90" cy="20.93" r="0.95" fill="#111"/><circle cx="3.31" cy="17.20" r="0.95" fill="#111"/><circle cx="2.00" cy="12.10" r="0.95" fill="#111"/><circle cx="3.31" cy="7.00" r="0.95" fill="#111"/><circle cx="6.90" cy="3.27" r="0.95" fill="#111"/><line x1="11.8" y1="12.1" x2="19.30" y2="11.84" stroke="#111" stroke-width="1.7" stroke-linecap="round"/><line x1="11.8" y1="12.1" x2="1.31" y2="12.47" stroke="#111" stroke-width="1.3" stroke-linecap="round"/><circle cx="11.8" cy="12.1" r="1.6" fill="#111"/></svg>
<svg class="a" style="left:321px;top:198.48px;" width="10" height="6.5" viewBox="0 0 10 6.5"><rect x="0.4" y="0.4" width="9.2" height="5.7" rx="0.8" fill="#c8d0b8" stroke="#505848" stroke-width="0.8"/><rect x="1.4" y="1.6" width="4.0" height="3.3" fill="#e0b818"/><rect x="5.5" y="1.4" width="3.5" height="3.7" fill="#f4fff0" stroke="#40c040" stroke-width="0.5"/><rect x="5.5" y="1.2" width="3.5" height="1" fill="#30d030"/></svg>
<div class="a" style="left:333.5px;top:207.98px;width:123px;height:5.8px;background:#72e472"></div>
<div class="t" style="left:333.7px;top:195.98px;font-size:5.8px;line-height:5.8px;color:#2a2ae6;width:123px;overflow:hidden">)</div>
<div class="t" style="left:333.7px;top:202.18px;font-size:5.8px;line-height:5.8px;color:#222;width:123px;overflow:hidden">MEYER / Zimmer Dr. Meier 2</div>
<div class="t" style="left:333.7px;top:208.38px;font-size:5.8px;line-height:5.8px;color:#222;width:123px;overflow:hidden">Beratung</div>
<div class="t" style="left:333.7px;top:214.58px;font-size:5.8px;line-height:5.8px;color:#222;width:123px;overflow:hidden">Mutter: 03745 7824 0; (14:44) 44 min zu spät</div>
<div class="a" style="left:294px;top:222.24px;width:162.5px;height:26px;background:#fff;overflow:hidden">

</div>
<svg class="a" style="left:294.5px;top:223.04px;" width="23.6" height="24.2" viewBox="0 0 23.6 24.2"><rect x="0.3" y="0.3" width="23.0" height="23.599999999999998" fill="#fff" stroke="#d0d4d8" stroke-width="0.6"/><circle cx="11.80" cy="1.90" r="0.95" fill="#111"/><circle cx="16.70" cy="3.27" r="0.95" fill="#111"/><circle cx="20.29" cy="7.00" r="0.95" fill="#111"/><circle cx="21.60" cy="12.10" r="0.95" fill="#111"/><circle cx="20.29" cy="17.20" r="0.95" fill="#111"/><circle cx="16.70" cy="20.93" r="0.95" fill="#111"/><circle cx="11.80" cy="22.30" r="0.95" fill="#111"/><circle cx="6.90" cy="20.93" r="0.95" fill="#111"/><circle cx="3.31" cy="17.20" r="0.95" fill="#111"/><circle cx="2.00" cy="12.10" r="0.95" fill="#111"/><circle cx="3.31" cy="7.00" r="0.95" fill="#111"/><circle cx="6.90" cy="3.27" r="0.95" fill="#111"/><line x1="11.8" y1="12.1" x2="19.28" y2="11.58" stroke="#111" stroke-width="1.7" stroke-linecap="round"/><line x1="11.8" y1="12.1" x2="1.31" y2="12.47" stroke="#111" stroke-width="1.3" stroke-linecap="round"/><circle cx="11.8" cy="12.1" r="1.6" fill="#111"/></svg>
<svg class="a" style="left:321px;top:226.04px;" width="10" height="6.5" viewBox="0 0 10 6.5"><rect x="0.4" y="0.4" width="9.2" height="5.7" rx="0.8" fill="#c8d0b8" stroke="#505848" stroke-width="0.8"/><rect x="1.4" y="1.6" width="4.0" height="3.3" fill="#e0b818"/><rect x="5.5" y="1.4" width="3.5" height="3.7" fill="#f4fff0" stroke="#40c040" stroke-width="0.5"/><rect x="5.5" y="1.2" width="3.5" height="1" fill="#30d030"/></svg>
<div class="a" style="left:333.5px;top:235.54px;width:123px;height:5.8px;background:#f46cc8"></div>
<div class="t" style="left:333.7px;top:223.54px;font-size:5.8px;line-height:5.8px;color:#222;width:123px;overflow:hidden">Carradine, David  (Nr: 00000065)</div>
<div class="t" style="left:333.7px;top:229.74px;font-size:5.8px;line-height:5.8px;color:#222;width:123px;overflow:hidden">MEYER / Zimmer Dr. Meier 2</div>
<div class="t" style="left:333.7px;top:235.94px;font-size:5.8px;line-height:5.8px;color:#222;width:123px;overflow:hidden">herausnehmbar Kontrolle</div>
<div class="t" style="left:333.7px;top:242.14px;font-size:5.8px;line-height:5.8px;color:#222;width:123px;overflow:hidden">(14:45) 30 min zu früh</div>
<div class="a" style="left:294px;top:249.80px;width:162.5px;height:26px;background:#fff;overflow:hidden">

</div>
<svg class="a" style="left:294.5px;top:250.6px;" width="23.6" height="24.2" viewBox="0 0 23.6 24.2"><rect x="0.3" y="0.3" width="23.0" height="23.599999999999998" fill="#fff" stroke="#d0d4d8" stroke-width="0.6"/><circle cx="11.80" cy="1.90" r="0.95" fill="#111"/><circle cx="16.70" cy="3.27" r="0.95" fill="#111"/><circle cx="20.29" cy="7.00" r="0.95" fill="#111"/><circle cx="21.60" cy="12.10" r="0.95" fill="#111"/><circle cx="20.29" cy="17.20" r="0.95" fill="#111"/><circle cx="16.70" cy="20.93" r="0.95" fill="#111"/><circle cx="11.80" cy="22.30" r="0.95" fill="#111"/><circle cx="6.90" cy="20.93" r="0.95" fill="#111"/><circle cx="3.31" cy="17.20" r="0.95" fill="#111"/><circle cx="2.00" cy="12.10" r="0.95" fill="#111"/><circle cx="3.31" cy="7.00" r="0.95" fill="#111"/><circle cx="6.90" cy="3.27" r="0.95" fill="#111"/><line x1="11.8" y1="12.1" x2="19.30" y2="11.84" stroke="#111" stroke-width="1.7" stroke-linecap="round"/><line x1="11.8" y1="12.1" x2="1.30" y2="12.10" stroke="#111" stroke-width="1.3" stroke-linecap="round"/><circle cx="11.8" cy="12.1" r="1.6" fill="#111"/></svg>
<svg class="a" style="left:321px;top:253.6px;" width="10" height="6.5" viewBox="0 0 10 6.5"><rect x="0.4" y="0.4" width="9.2" height="5.7" rx="0.8" fill="#c8d0b8" stroke="#505848" stroke-width="0.8"/><rect x="1.4" y="1.6" width="4.0" height="3.3" fill="#e0b818"/><rect x="5.5" y="1.4" width="3.5" height="3.7" fill="#f4fff0" stroke="#40c040" stroke-width="0.5"/><rect x="5.5" y="1.2" width="3.5" height="1" fill="#30d030"/></svg>
<div class="t" style="left:333.7px;top:251.10px;font-size:5.8px;line-height:5.8px;color:#222;width:123px;overflow:hidden">Gäbriel, Prof. Dr. Florian Peter Peer Graf  (Nr: 00000064)</div>
<div class="t" style="left:333.7px;top:263.50px;font-size:5.8px;line-height:5.8px;color:#222;width:123px;overflow:hidden">Ungeplant</div>
<div class="t" style="left:333.7px;top:269.70px;font-size:5.8px;line-height:5.8px;color:#222;width:123px;overflow:hidden">ohne Termin</div>
<div class="a" style="left:294px;top:277.36px;width:162.5px;height:26px;background:#fff;overflow:hidden">

</div>
<svg class="a" style="left:294.5px;top:278.16px;" width="23.6" height="24.2" viewBox="0 0 23.6 24.2"><rect x="0.3" y="0.3" width="23.0" height="23.599999999999998" fill="#fff" stroke="#d0d4d8" stroke-width="0.6"/><circle cx="11.80" cy="1.90" r="0.95" fill="#111"/><circle cx="16.70" cy="3.27" r="0.95" fill="#111"/><circle cx="20.29" cy="7.00" r="0.95" fill="#111"/><circle cx="21.60" cy="12.10" r="0.95" fill="#111"/><circle cx="20.29" cy="17.20" r="0.95" fill="#111"/><circle cx="16.70" cy="20.93" r="0.95" fill="#111"/><circle cx="11.80" cy="22.30" r="0.95" fill="#111"/><circle cx="6.90" cy="20.93" r="0.95" fill="#111"/><circle cx="3.31" cy="17.20" r="0.95" fill="#111"/><circle cx="2.00" cy="12.10" r="0.95" fill="#111"/><circle cx="3.31" cy="7.00" r="0.95" fill="#111"/><circle cx="6.90" cy="3.27" r="0.95" fill="#111"/><line x1="11.8" y1="12.1" x2="19.30" y2="12.36" stroke="#111" stroke-width="1.7" stroke-linecap="round"/><line x1="11.8" y1="12.1" x2="1.31" y2="11.73" stroke="#111" stroke-width="1.3" stroke-linecap="round"/><circle cx="11.8" cy="12.1" r="1.6" fill="#111"/></svg>
<svg class="a" style="left:321px;top:281.16px;" width="10" height="6.5" viewBox="0 0 10 6.5"><rect x="0.4" y="0.4" width="9.2" height="5.7" rx="0.8" fill="#c8d0b8" stroke="#505848" stroke-width="0.8"/><rect x="1.4" y="1.6" width="4.0" height="3.3" fill="#e0b818"/><rect x="5.5" y="1.4" width="3.5" height="3.7" fill="#f4fff0" stroke="#40c040" stroke-width="0.5"/><rect x="5.5" y="1.2" width="3.5" height="1" fill="#30d030"/></svg>
<div class="a" style="left:333.5px;top:290.66px;width:123px;height:5.8px;background:#f8f87c"></div>
<div class="t" style="left:333.7px;top:278.66px;font-size:5.8px;line-height:5.8px;color:#2a2ae6;width:123px;overflow:hidden">)</div>
<div class="t" style="left:333.7px;top:284.86px;font-size:5.8px;line-height:5.8px;color:#222;width:123px;overflow:hidden">MEYER / Zimmer Dr. Meier 2</div>
<div class="t" style="left:333.7px;top:291.06px;font-size:5.8px;line-height:5.8px;color:#222;width:123px;overflow:hidden">L Eins Neuer Pat.</div>
<div class="t" style="left:333.7px;top:297.26px;font-size:5.8px;line-height:5.8px;color:#222;width:123px;overflow:hidden">Kontaktdaten erfragen; (14:46) 26 min zu spät</div>
<div class="a" style="left:294px;top:304.92px;width:162.5px;height:26px;background:#fff;overflow:hidden">

</div>
<svg class="a" style="left:294.5px;top:305.72px;" width="23.6" height="24.2" viewBox="0 0 23.6 24.2"><rect x="0.3" y="0.3" width="23.0" height="23.599999999999998" fill="#fff" stroke="#d0d4d8" stroke-width="0.6"/><circle cx="11.80" cy="1.90" r="0.95" fill="#111"/><circle cx="16.70" cy="3.27" r="0.95" fill="#111"/><circle cx="20.29" cy="7.00" r="0.95" fill="#111"/><circle cx="21.60" cy="12.10" r="0.95" fill="#111"/><circle cx="20.29" cy="17.20" r="0.95" fill="#111"/><circle cx="16.70" cy="20.93" r="0.95" fill="#111"/><circle cx="11.80" cy="22.30" r="0.95" fill="#111"/><circle cx="6.90" cy="20.93" r="0.95" fill="#111"/><circle cx="3.31" cy="17.20" r="0.95" fill="#111"/><circle cx="2.00" cy="12.10" r="0.95" fill="#111"/><circle cx="3.31" cy="7.00" r="0.95" fill="#111"/><circle cx="6.90" cy="3.27" r="0.95" fill="#111"/><line x1="11.8" y1="12.1" x2="19.27" y2="12.75" stroke="#111" stroke-width="1.7" stroke-linecap="round"/><line x1="11.8" y1="12.1" x2="1.66" y2="9.38" stroke="#111" stroke-width="1.3" stroke-linecap="round"/><circle cx="11.8" cy="12.1" r="1.6" fill="#111"/></svg>
<svg class="a" style="left:321px;top:308.72px;" width="10" height="6.5" viewBox="0 0 10 6.5"><rect x="0.4" y="0.4" width="9.2" height="5.7" rx="0.8" fill="#c8d0b8" stroke="#505848" stroke-width="0.8"/><rect x="1.4" y="1.6" width="4.0" height="3.3" fill="#e0b818"/><rect x="5.5" y="1.4" width="3.5" height="3.7" fill="#f4fff0" stroke="#40c040" stroke-width="0.5"/><rect x="5.5" y="1.2" width="3.5" height="1" fill="#30d030"/></svg>
<div class="a" style="left:333.5px;top:318.22px;width:123px;height:5.8px;background:#f87c7a"></div>
<div class="t" style="left:333.7px;top:306.22px;font-size:5.8px;line-height:5.8px;color:#2a2ae6;width:123px;overflow:hidden">)</div>
<div class="t" style="left:333.7px;top:312.42px;font-size:5.8px;line-height:5.8px;color:#222;width:123px;overflow:hidden">MEYER / Zimmer Dr. Meier 2</div>
<div class="t" style="left:333.7px;top:318.62px;font-size:5.8px;line-height:5.8px;color:#222;width:123px;overflow:hidden">Schmerzpatient</div>
<div class="t" style="left:333.7px;top:324.82px;font-size:5.8px;line-height:5.8px;color:#222;width:123px;overflow:hidden">Anamnesebogen ausfüllen</div>
<div class="a" style="left:470px;top:93px;width:841px;height:19px;background:#eef2f9"></div>
<div class="a" style="left:470px;top:93px;width:841px;height:1px;background:#fbfcfe"></div>
<div class="a" style="left:470px;top:111.6px;width:841px;height:1px;background:#c4ccd8"></div>
<div class="t" style="left:472.7px;top:99.30px;font-size:8.2px;line-height:8.2px;color:#1a1a1a;">Ansicht:</div>
<div class="a" style="left:523.2px;top:95.5px;width:105.7px;height:14.2px;background:#e8e8e8;border:1px solid #c4c4c4"></div>
<svg class="a" style="left:620.9px;top:101.1px;" width="5" height="3" viewBox="0 0 5 3"><path d="M0.5 0.5L2.5 2.5L4.5 0.5" fill="none" stroke="#555" stroke-width="0.8"/></svg>
<div class="t" style="left:525.4px;top:99.80px;font-size:8.25px;line-height:8.25px;color:#333;">TV-Bildschirm</div>
<svg class="a" style="left:1257px;top:96px;" width="11" height="13" viewBox="0 0 11 13"><path d="M0.5 0.5h7l3 3v9h-10z" fill="#f4f8fc" stroke="#98a8c0" stroke-width="0.7"/><path d="M2.2 6.2a3.3 3.3 0 0 1 6-1.5" fill="none" stroke="#1a78e0" stroke-width="1.6"/><path d="M8.8 7.2a3.3 3.3 0 0 1-6 1.5" fill="none" stroke="#1a78e0" stroke-width="1.6"/><path d="M7 3.5l2 1.2-0.3-2.2z" fill="#1a78e0"/></svg>
<svg class="a" style="left:1272px;top:96px;" width="15" height="13" viewBox="0 0 15 13"><circle cx="4.8" cy="3.6" r="2.8" fill="#f8b060"/><path d="M2 2.5q2.8-3 5.6 0" fill="none" stroke="#c05010" stroke-width="1.2"/><path d="M0.5 12.5q0-6 4.3-6t4.3 6z" fill="#e04818"/><path d="M8 5.5h3.5V3.5l3.3 3-3.3 3V7.5H8z" fill="#38c838"/></svg>
<svg class="a" style="left:1295px;top:95px;" width="14" height="13" viewBox="0 0 14 13"><circle cx="5" cy="8" r="3" fill="none" stroke="#a4a8c4" stroke-width="2.6"/><circle cx="5" cy="8" r="4.6" fill="none" stroke="#a4a8c4" stroke-width="1.2" stroke-dasharray="1.3 1.1"/><circle cx="10" cy="4" r="2.2" fill="none" stroke="#b0b4d0" stroke-width="1.8"/><circle cx="10" cy="4" r="3.4" fill="none" stroke="#b0b4d0" stroke-width="1" stroke-dasharray="1.1 0.9"/></svg>
<div class="a" style="left:470px;top:112.6px;width:841px;height:433.4px;background:linear-gradient(90deg,#cfdcec,#d3dfee 50%,#cedbeb)"></div>
<div class="a" style="left:476px;top:117px;width:795px;height:16.4px;background:#c8c7e3"></div>
<div class="a" style="left:1271px;top:117px;width:9.5px;height:16.4px;background:#f6f8fa"></div>
<div class="a" style="left:476px;top:133.4px;width:804.5px;height:99px;background:#fff;box-shadow:0 0 0 0.8px #a8b0bc"></div>
<div class="t" style="left:481.5px;top:118.71px;font-size:7.3px;line-height:7.3px;color:#111;font-weight:bold;">Wartezimmer</div>
<svg class="a" style="left:1271px;top:118.4px;" width="9" height="15" viewBox="0 0 9 15"><rect x="0.2" y="0" width="8.6" height="3.4" rx="0.8" fill="#20c820"/><rect x="1.8" y="1.2" width="5.4" height="1" fill="#80e880"/><path d="M4.5 4L8.8 9H6.4V14.8H2.6V9H0.2z" fill="#38d838"/><path d="M4.5 5L6.8 8.2H5.4V14H3.6V8.2H2.2z" fill="#68f068"/></svg>
<div class="a" style="left:675px;top:134.4px;width:0.6px;height:97px;background:#eceef2"></div>
<div class="a" style="left:755px;top:134.4px;width:0.6px;height:97px;background:#eceef2"></div>
<div class="a" style="left:913px;top:134.4px;width:0.6px;height:97px;background:#eceef2"></div>
<div class="a" style="left:993px;top:134.4px;width:0.6px;height:97px;background:#eceef2"></div>
<div class="a" style="left:1072px;top:134.4px;width:0.6px;height:97px;background:#eceef2"></div>
<div class="a" style="left:1271px;top:134.4px;width:0.6px;height:97px;background:#eceef2"></div>
<div class="a" style="left:477px;top:146.7px;width:794px;height:0.6px;background:#f1f2f5"></div>
<div class="a" style="left:477px;top:157.2px;width:794px;height:0.6px;background:#f1f2f5"></div>
<div class="a" style="left:477px;top:167.7px;width:794px;height:0.6px;background:#f1f2f5"></div>
<div class="a" style="left:477px;top:178.2px;width:794px;height:0.6px;background:#f1f2f5"></div>
<div class="a" style="left:477px;top:188.7px;width:794px;height:0.6px;background:#f1f2f5"></div>
<div class="a" style="left:477px;top:199.2px;width:794px;height:0.6px;background:#f1f2f5"></div>
<div class="a" style="left:477px;top:209.7px;width:794px;height:0.6px;background:#f1f2f5"></div>
<div class="a" style="left:477px;top:220.2px;width:794px;height:0.6px;background:#f1f2f5"></div>
<div class="a" style="left:477px;top:230.7px;width:794px;height:0.6px;background:#f1f2f5"></div>
<div class="a" style="left:755.5px;top:146.9px;width:515.5px;height:9.8px;background:#f5a8f2"></div>
<div class="a" style="left:755.5px;top:178.4px;width:515.5px;height:9.8px;background:#f8daf6"></div>
<div class="t" style="left:480px;top:138.40px;font-size:6.9px;line-height:6.9px;color:#222;">Patient</div>
<div class="t" style="left:695px;width:40px;text-align:center;top:138.40px;font-size:6.9px;line-height:6.9px;color:#222">Zeit</div>
<div class="t" style="left:758px;top:138.40px;font-size:6.9px;line-height:6.9px;color:#222;">Terminart</div>
<div class="t" style="left:916.8px;top:138.40px;font-size:6.9px;line-height:6.9px;color:#222;">Stuhl</div>
<div class="t" style="left:996px;top:138.40px;font-size:6.9px;line-height:6.9px;color:#222;">Behandler</div>
<div class="t" style="left:1075.9px;top:138.40px;font-size:6.9px;line-height:6.9px;color:#222;">Bemerkung</div>
<svg class="a" style="left:479.5px;top:149.1px;" width="8.5" height="6.5" viewBox="0 0 8.5 6.5"><rect x="0.4" y="0.4" width="7.7" height="5.7" rx="0.8" fill="#c8d0b8" stroke="#505848" stroke-width="0.8"/><rect x="1.4" y="1.6" width="3.4000000000000004" height="3.3" fill="#e0b818"/><rect x="4.675000000000001" y="1.4" width="2.9749999999999996" height="3.7" fill="#f4fff0" stroke="#40c040" stroke-width="0.5"/><rect x="4.675000000000001" y="1.2" width="2.9749999999999996" height="1" fill="#30d030"/></svg>
<div class="t" style="left:488.5px;top:150.10px;font-size:6.9px;line-height:6.9px;color:#3e7a42;">Neuer, Manuela</div>
<div class="t" style="left:695px;width:40px;text-align:center;top:150.10px;font-size:6.9px;line-height:6.9px;color:#3e7a42">00:12</div>
<div class="t" style="left:758px;top:150.10px;font-size:6.9px;line-height:6.9px;color:#4c524c;">herausnehmbar einsetzen</div>
<div class="t" style="left:916.8px;top:150.10px;font-size:6.9px;line-height:6.9px;color:#3e7a42;">Zimmer Dr. Meier 1</div>
<div class="t" style="left:1075.9px;top:150.10px;font-size:6.9px;line-height:6.9px;color:#4c524c;">hat Schmerzen; (14:40) 100 min zu spät</div>
<svg class="a" style="left:479.5px;top:159.6px;" width="8.5" height="6.5" viewBox="0 0 8.5 6.5"><rect x="0.4" y="0.4" width="7.7" height="5.7" rx="0.8" fill="#c8d0b8" stroke="#505848" stroke-width="0.8"/><rect x="1.4" y="1.6" width="3.4000000000000004" height="3.3" fill="#e0b818"/><rect x="4.675000000000001" y="1.4" width="2.9749999999999996" height="3.7" fill="#f4fff0" stroke="#40c040" stroke-width="0.5"/><rect x="4.675000000000001" y="1.2" width="2.9749999999999996" height="1" fill="#30d030"/></svg>
<div class="t" style="left:488.5px;top:160.60px;font-size:6.9px;line-height:6.9px;color:#161616;">Trollinger, Fritz Freiherr</div>
<div class="t" style="left:695px;width:40px;text-align:center;top:160.60px;font-size:6.9px;line-height:6.9px;color:#161616">00:10</div>
<div class="t" style="left:1075.9px;top:160.60px;font-size:6.9px;line-height:6.9px;color:#161616;">ohne Termin</div>
<svg class="a" style="left:479.5px;top:170.1px;" width="8.5" height="6.5" viewBox="0 0 8.5 6.5"><rect x="0.4" y="0.4" width="7.7" height="5.7" rx="0.8" fill="#c8d0b8" stroke="#505848" stroke-width="0.8"/><rect x="1.4" y="1.6" width="3.4000000000000004" height="3.3" fill="#e0b818"/><rect x="4.675000000000001" y="1.4" width="2.9749999999999996" height="3.7" fill="#f4fff0" stroke="#40c040" stroke-width="0.5"/><rect x="4.675000000000001" y="1.2" width="2.9749999999999996" height="1" fill="#30d030"/></svg>
<div class="t" style="left:488.5px;top:171.10px;font-size:6.9px;line-height:6.9px;color:#3e7a42;">Schulze, Lars</div>
<div class="t" style="left:695px;width:40px;text-align:center;top:171.10px;font-size:6.9px;line-height:6.9px;color:#3e7a42">00:09</div>
<div class="t" style="left:758px;top:171.10px;font-size:6.9px;line-height:6.9px;color:#3e7a42;">Bogenwechsel</div>
<div class="t" style="left:916.8px;top:171.10px;font-size:6.9px;line-height:6.9px;color:#3e7a42;">Zimmer Dr. Meier 1</div>
<div class="t" style="left:1075.9px;top:171.10px;font-size:6.9px;line-height:6.9px;color:#3e7a42;">(14:43) 23 min zu spät</div>
<svg class="a" style="left:480px;top:180.1px;" width="8" height="8" viewBox="0 0 8 8"><circle cx="4" cy="4" r="3.6" fill="#30b030" stroke="#188018" stroke-width="0.5"/><text x="2.2" y="6.3" font-size="6" font-weight="bold" font-family="Liberation Sans" fill="#fff">?</text></svg>
<div class="t" style="left:695px;width:40px;text-align:center;top:181.60px;font-size:6.9px;line-height:6.9px;color:#3e7a42">00:08</div>
<div class="t" style="left:758px;top:181.60px;font-size:6.9px;line-height:6.9px;color:#4c524c;">Beratung</div>
<div class="t" style="left:916.8px;top:181.60px;font-size:6.9px;line-height:6.9px;color:#3e7a42;">Zimmer Dr. Meier 2</div>
<div class="t" style="left:996px;top:181.60px;font-size:6.9px;line-height:6.9px;color:#3e7a42;">MEYER</div>
<div class="t" style="left:1075.9px;top:181.60px;font-size:6.9px;line-height:6.9px;color:#4c524c;">Mutter: 03745 7824 0; (14:44) 44 min zu spät</div>
<svg class="a" style="left:479.5px;top:191.1px;" width="8.5" height="6.5" viewBox="0 0 8.5 6.5"><rect x="0.4" y="0.4" width="7.7" height="5.7" rx="0.8" fill="#c8d0b8" stroke="#505848" stroke-width="0.8"/><rect x="1.4" y="1.6" width="3.4000000000000004" height="3.3" fill="#e0b818"/><rect x="4.675000000000001" y="1.4" width="2.9749999999999996" height="3.7" fill="#f4fff0" stroke="#40c040" stroke-width="0.5"/><rect x="4.675000000000001" y="1.2" width="2.9749999999999996" height="1" fill="#30d030"/></svg>
<div class="t" style="left:488.5px;top:192.10px;font-size:6.9px;line-height:6.9px;color:#161616;">Carradine, David</div>
<div class="t" style="left:695px;width:40px;text-align:center;top:192.10px;font-size:6.9px;line-height:6.9px;color:#161616">00:07</div>
<div class="t" style="left:758px;top:192.10px;font-size:6.9px;line-height:6.9px;color:#161616;">herausnehmbar Kontrolle</div>
<div class="t" style="left:916.8px;top:192.10px;font-size:6.9px;line-height:6.9px;color:#161616;">Zimmer Dr. Meier 2</div>
<div class="t" style="left:996px;top:192.10px;font-size:6.9px;line-height:6.9px;color:#161616;">MEYER</div>
<div class="t" style="left:1075.9px;top:192.10px;font-size:6.9px;line-height:6.9px;color:#161616;">(14:45) 30 min zu früh</div>
<svg class="a" style="left:479.5px;top:201.6px;" width="8.5" height="6.5" viewBox="0 0 8.5 6.5"><rect x="0.4" y="0.4" width="7.7" height="5.7" rx="0.8" fill="#c8d0b8" stroke="#505848" stroke-width="0.8"/><rect x="1.4" y="1.6" width="3.4000000000000004" height="3.3" fill="#e0b818"/><rect x="4.675000000000001" y="1.4" width="2.9749999999999996" height="3.7" fill="#f4fff0" stroke="#40c040" stroke-width="0.5"/><rect x="4.675000000000001" y="1.2" width="2.9749999999999996" height="1" fill="#30d030"/></svg>
<div class="t" style="left:488.5px;top:202.60px;font-size:6.9px;line-height:6.9px;color:#161616;">Gäbriel, Prof. Dr. Florian Peter Peer Graf</div>
<div class="t" style="left:695px;width:40px;text-align:center;top:202.60px;font-size:6.9px;line-height:6.9px;color:#161616">00:07</div>
<div class="t" style="left:1075.9px;top:202.60px;font-size:6.9px;line-height:6.9px;color:#161616;">ohne Termin</div>
<svg class="a" style="left:480px;top:211.6px;" width="8" height="8" viewBox="0 0 8 8"><circle cx="4" cy="4" r="3.6" fill="#30b030" stroke="#188018" stroke-width="0.5"/><text x="2.2" y="6.3" font-size="6" font-weight="bold" font-family="Liberation Sans" fill="#fff">?</text></svg>
<div class="t" style="left:695px;width:40px;text-align:center;top:213.10px;font-size:6.9px;line-height:6.9px;color:#3e7a42">00:06</div>
<div class="t" style="left:758px;top:213.10px;font-size:6.9px;line-height:6.9px;color:#3e7a42;">L Eins Neuer Pat.</div>
<div class="t" style="left:916.8px;top:213.10px;font-size:6.9px;line-height:6.9px;color:#3e7a42;">Zimmer Dr. Meier 2</div>
<div class="t" style="left:996px;top:213.10px;font-size:6.9px;line-height:6.9px;color:#3e7a42;">MEYER</div>
<div class="t" style="left:1075.9px;top:213.10px;font-size:6.9px;line-height:6.9px;color:#3e7a42;">Kontaktdaten erfragen; (14:46) 26 min zu spät</div>
<svg class="a" style="left:480px;top:222.1px;" width="8" height="8" viewBox="0 0 8 8"><circle cx="4" cy="4" r="3.6" fill="#30b030" stroke="#188018" stroke-width="0.5"/><text x="2.2" y="6.3" font-size="6" font-weight="bold" font-family="Liberation Sans" fill="#fff">?</text></svg>
<div class="t" style="left:695px;width:40px;text-align:center;top:223.60px;font-size:6.9px;line-height:6.9px;color:#3e7a42">00:04</div>
<div class="t" style="left:758px;top:223.60px;font-size:6.9px;line-height:6.9px;color:#3e7a42;">Schmerzpatient</div>
<div class="t" style="left:916.8px;top:223.60px;font-size:6.9px;line-height:6.9px;color:#3e7a42;">Zimmer Dr. Meier 2</div>
<div class="t" style="left:996px;top:223.60px;font-size:6.9px;line-height:6.9px;color:#3e7a42;">MEYER</div>
<div class="t" style="left:1075.9px;top:223.60px;font-size:6.9px;line-height:6.9px;color:#3e7a42;">Anamnesebogen ausfüllen</div>
<div class="a" style="left:471.6px;top:302.25px;width:375.2px;height:15px;background:#c8c7e3"></div>
<div class="a" style="left:846.8px;top:302.25px;width:10.5px;height:15px;background:#f6f8fa"></div>
<div class="a" style="left:471.6px;top:317.25px;width:385.7px;height:25px;background:#fff;box-shadow:0 0 0 0.8px #a8b0bc"></div>
<div class="t" style="left:477.1px;top:303.30px;font-size:7.3px;line-height:7.3px;color:#111;font-weight:bold;">Behandlung 1</div>
<svg class="a" style="left:847.8px;top:302.25px;" width="9" height="15" viewBox="0 0 9 15"><rect x="0.2" y="0" width="8.6" height="3.4" rx="0.8" fill="#20c820"/><rect x="1.8" y="1.2" width="5.4" height="1" fill="#80e880"/><path d="M4.5 4L8.8 9H6.4V14.8H2.6V9H0.2z" fill="#38d838"/><path d="M4.5 5L6.8 8.2H5.4V14H3.6V8.2H2.2z" fill="#68f068"/></svg>
<div class="a" style="left:566px;top:318.25px;width:0.6px;height:23px;background:#eceef2"></div>
<div class="a" style="left:603.5px;top:318.25px;width:0.6px;height:23px;background:#eceef2"></div>
<div class="a" style="left:679px;top:318.25px;width:0.6px;height:23px;background:#eceef2"></div>
<div class="a" style="left:716.4px;top:318.25px;width:0.6px;height:23px;background:#eceef2"></div>
<div class="a" style="left:754.4px;top:318.25px;width:0.6px;height:23px;background:#eceef2"></div>
<div class="a" style="left:847px;top:318.25px;width:0.6px;height:23px;background:#eceef2"></div>
<div class="a" style="left:472.6px;top:330.55px;width:374.4px;height:0.6px;background:#f1f2f5"></div>
<div class="a" style="left:472.6px;top:341.05px;width:374.4px;height:0.6px;background:#f1f2f5"></div>
<div class="t" style="left:476.1px;top:321.85px;font-size:6.9px;line-height:6.9px;color:#222;">Patient</div>
<div class="t" style="left:565px;width:40px;text-align:center;top:321.85px;font-size:6.9px;line-height:6.9px;color:#222">Zeit</div>
<div class="t" style="left:607.6px;top:321.85px;font-size:6.9px;line-height:6.9px;color:#222;">Terminart</div>
<div class="t" style="left:681.8px;top:321.85px;font-size:6.9px;line-height:6.9px;color:#222;">Stuhl</div>
<div class="t" style="left:719.6px;top:321.85px;font-size:6.9px;line-height:6.9px;color:#222;">Behandler</div>
<div class="t" style="left:757.2px;top:321.85px;font-size:6.9px;line-height:6.9px;color:#222;">Bemerkung</div>
<svg class="a" style="left:475.1px;top:332.95px;" width="8.5" height="6.5" viewBox="0 0 8.5 6.5"><rect x="0.4" y="0.4" width="7.7" height="5.7" rx="0.8" fill="#c8d0b8" stroke="#505848" stroke-width="0.8"/><rect x="1.4" y="1.6" width="3.4000000000000004" height="3.3" fill="#e0b818"/><rect x="4.675000000000001" y="1.4" width="2.9749999999999996" height="3.7" fill="#f4fff0" stroke="#40c040" stroke-width="0.5"/><rect x="4.675000000000001" y="1.2" width="2.9749999999999996" height="1" fill="#30d030"/></svg>
<div class="t" style="left:484.6px;top:333.95px;font-size:6.9px;line-height:6.9px;color:#161616;">Glücklich, Ulrike</div>
<div class="t" style="left:565px;width:40px;text-align:center;top:333.95px;font-size:6.9px;line-height:6.9px;color:#161616">00:13</div>
<div class="t" style="left:607.6px;top:333.95px;font-size:6.9px;line-height:6.9px;color:#161616;">01 und Zst.</div>
<div class="t" style="left:681.8px;top:333.95px;font-size:6.9px;line-height:6.9px;color:#161616;">Zimmer ...</div>
<div class="t" style="left:719.6px;top:333.95px;font-size:6.9px;line-height:6.9px;color:#161616;"></div>
<div class="t" style="left:757.2px;top:333.95px;font-size:6.9px;line-height:6.9px;color:#161616;"></div>
<div class="a" style="left:472px;top:385.5px;width:375px;height:15px;background:#c8c7e3"></div>
<div class="a" style="left:847px;top:385.5px;width:10.5px;height:15px;background:#f6f8fa"></div>
<div class="a" style="left:472px;top:400.5px;width:385.5px;height:25px;background:#fff;box-shadow:0 0 0 0.8px #a8b0bc"></div>
<div class="t" style="left:477.5px;top:386.55px;font-size:7.3px;line-height:7.3px;color:#111;font-weight:bold;">Behandlung 2</div>
<svg class="a" style="left:848px;top:385.5px;" width="9" height="15" viewBox="0 0 9 15"><rect x="0.2" y="0" width="8.6" height="3.4" rx="0.8" fill="#20c820"/><rect x="1.8" y="1.2" width="5.4" height="1" fill="#80e880"/><path d="M4.5 4L8.8 9H6.4V14.8H2.6V9H0.2z" fill="#38d838"/><path d="M4.5 5L6.8 8.2H5.4V14H3.6V8.2H2.2z" fill="#68f068"/></svg>
<div class="a" style="left:566px;top:401.5px;width:0.6px;height:23px;background:#eceef2"></div>
<div class="a" style="left:603.5px;top:401.5px;width:0.6px;height:23px;background:#eceef2"></div>
<div class="a" style="left:679px;top:401.5px;width:0.6px;height:23px;background:#eceef2"></div>
<div class="a" style="left:716.4px;top:401.5px;width:0.6px;height:23px;background:#eceef2"></div>
<div class="a" style="left:754.4px;top:401.5px;width:0.6px;height:23px;background:#eceef2"></div>
<div class="a" style="left:847px;top:401.5px;width:0.6px;height:23px;background:#eceef2"></div>
<div class="a" style="left:473px;top:413.8px;width:374px;height:0.6px;background:#f1f2f5"></div>
<div class="a" style="left:473px;top:424.3px;width:374px;height:0.6px;background:#f1f2f5"></div>
<div class="t" style="left:476.5px;top:405.10px;font-size:6.9px;line-height:6.9px;color:#222;">Patient</div>
<div class="t" style="left:565px;width:40px;text-align:center;top:405.10px;font-size:6.9px;line-height:6.9px;color:#222">Zeit</div>
<div class="t" style="left:607.6px;top:405.10px;font-size:6.9px;line-height:6.9px;color:#222;">Terminart</div>
<div class="t" style="left:681.8px;top:405.10px;font-size:6.9px;line-height:6.9px;color:#222;">Stuhl</div>
<div class="t" style="left:719.6px;top:405.10px;font-size:6.9px;line-height:6.9px;color:#222;">Behandler</div>
<div class="t" style="left:757.2px;top:405.10px;font-size:6.9px;line-height:6.9px;color:#222;">Bemerkung</div>
<svg class="a" style="left:475.5px;top:416.2px;" width="8.5" height="6.5" viewBox="0 0 8.5 6.5"><rect x="0.4" y="0.4" width="7.7" height="5.7" rx="0.8" fill="#c8d0b8" stroke="#505848" stroke-width="0.8"/><rect x="1.4" y="1.6" width="3.4000000000000004" height="3.3" fill="#e0b818"/><rect x="4.675000000000001" y="1.4" width="2.9749999999999996" height="3.7" fill="#f4fff0" stroke="#40c040" stroke-width="0.5"/><rect x="4.675000000000001" y="1.2" width="2.9749999999999996" height="1" fill="#30d030"/></svg>
<div class="t" style="left:485px;top:417.20px;font-size:6.9px;line-height:6.9px;color:#3e7a42;">Müller, Frieda</div>
<div class="t" style="left:565px;width:40px;text-align:center;top:417.20px;font-size:6.9px;line-height:6.9px;color:#3e7a42">00:13</div>
<div class="t" style="left:607.6px;top:417.20px;font-size:6.9px;line-height:6.9px;color:#3e7a42;">Bogenwechsel</div>
<div class="t" style="left:681.8px;top:417.20px;font-size:6.9px;line-height:6.9px;color:#3e7a42;">Zimmer...</div>
<div class="t" style="left:719.6px;top:417.20px;font-size:6.9px;line-height:6.9px;color:#3e7a42;"></div>
<div class="t" style="left:757.2px;top:417.20px;font-size:6.9px;line-height:6.9px;color:#3e7a42;"></div>
<div class="a" style="left:473.3px;top:477px;width:372.9px;height:15px;background:#c8c7e3"></div>
<div class="a" style="left:846.2px;top:477px;width:10.5px;height:15px;background:#f6f8fa"></div>
<div class="a" style="left:473.3px;top:492px;width:383.4px;height:25px;background:#fff;box-shadow:0 0 0 0.8px #a8b0bc"></div>
<div class="t" style="left:478.8px;top:478.05px;font-size:7.3px;line-height:7.3px;color:#111;font-weight:bold;">Behandlung 3</div>
<svg class="a" style="left:847.2px;top:477px;" width="9" height="15" viewBox="0 0 9 15"><rect x="0.2" y="0" width="8.6" height="3.4" rx="0.8" fill="#20c820"/><rect x="1.8" y="1.2" width="5.4" height="1" fill="#80e880"/><path d="M4.5 4L8.8 9H6.4V14.8H2.6V9H0.2z" fill="#38d838"/><path d="M4.5 5L6.8 8.2H5.4V14H3.6V8.2H2.2z" fill="#68f068"/></svg>
<div class="a" style="left:566px;top:493px;width:0.6px;height:23px;background:#eceef2"></div>
<div class="a" style="left:603.5px;top:493px;width:0.6px;height:23px;background:#eceef2"></div>
<div class="a" style="left:679px;top:493px;width:0.6px;height:23px;background:#eceef2"></div>
<div class="a" style="left:716.4px;top:493px;width:0.6px;height:23px;background:#eceef2"></div>
<div class="a" style="left:754.4px;top:493px;width:0.6px;height:23px;background:#eceef2"></div>
<div class="a" style="left:847px;top:493px;width:0.6px;height:23px;background:#eceef2"></div>
<div class="a" style="left:474.3px;top:505.3px;width:372.7px;height:0.6px;background:#f1f2f5"></div>
<div class="a" style="left:474.3px;top:515.8px;width:372.7px;height:0.6px;background:#f1f2f5"></div>
<div class="a" style="left:604px;top:505.6px;width:242px;height:9.8px;background:#c6f2c6"></div>
<div class="t" style="left:477.8px;top:496.60px;font-size:6.9px;line-height:6.9px;color:#222;">Patient</div>
<div class="t" style="left:565px;width:40px;text-align:center;top:496.60px;font-size:6.9px;line-height:6.9px;color:#222">Zeit</div>
<div class="t" style="left:607.6px;top:496.60px;font-size:6.9px;line-height:6.9px;color:#222;">Terminart</div>
<div class="t" style="left:681.8px;top:496.60px;font-size:6.9px;line-height:6.9px;color:#222;">Stuhl</div>
<div class="t" style="left:719.6px;top:496.60px;font-size:6.9px;line-height:6.9px;color:#222;">Behandler</div>
<div class="t" style="left:757.2px;top:496.60px;font-size:6.9px;line-height:6.9px;color:#222;">Bemerkung</div>
<svg class="a" style="left:476.8px;top:507.7px;" width="8.5" height="6.5" viewBox="0 0 8.5 6.5"><rect x="0.4" y="0.4" width="7.7" height="5.7" rx="0.8" fill="#c8d0b8" stroke="#505848" stroke-width="0.8"/><rect x="1.4" y="1.6" width="3.4000000000000004" height="3.3" fill="#e0b818"/><rect x="4.675000000000001" y="1.4" width="2.9749999999999996" height="3.7" fill="#f4fff0" stroke="#40c040" stroke-width="0.5"/><rect x="4.675000000000001" y="1.2" width="2.9749999999999996" height="1" fill="#30d030"/></svg>
<div class="t" style="left:486.3px;top:508.70px;font-size:6.9px;line-height:6.9px;color:#161616;">Beckenhauer, Bob</div>
<div class="t" style="left:565px;width:40px;text-align:center;top:508.70px;font-size:6.9px;line-height:6.9px;color:#161616">00:13</div>
<div class="t" style="left:607.6px;top:508.70px;font-size:6.9px;line-height:6.9px;color:#161616;">Abdruck</div>
<div class="t" style="left:681.8px;top:508.70px;font-size:6.9px;line-height:6.9px;color:#161616;">Zimmer...</div>
<div class="t" style="left:719.6px;top:508.70px;font-size:6.9px;line-height:6.9px;color:#161616;"></div>
<div class="t" style="left:757.2px;top:508.70px;font-size:6.9px;line-height:6.9px;color:#161616;">(14:39) 36 min zu früh</div>
<div class="a" style="left:896.5px;top:300px;width:367.3px;height:16.1px;background:#b9d8f8"></div>
<div class="a" style="left:1263.8px;top:300px;width:10px;height:16.1px;background:#f6f8fa"></div>
<div class="a" style="left:896.5px;top:316.1px;width:377.3px;height:25px;background:#fff;box-shadow:0 0 0 0.8px #a8b0bc"></div>
<div class="t" style="left:902px;top:301.57px;font-size:7.3px;line-height:7.3px;color:#111;font-weight:bold;">Rezeption</div>
<div class="t" style="left:902px;top:308.80px;font-size:5.5px;line-height:5.5px;color:#c8b0f0;-webkit-text-stroke:0;">1 Patient</div>
<svg class="a" style="left:1264.3px;top:301.1px;" width="9" height="15" viewBox="0 0 9 15"><rect x="0.2" y="0" width="8.6" height="3.4" rx="0.8" fill="#20c820"/><rect x="1.8" y="1.2" width="5.4" height="1" fill="#80e880"/><path d="M4.5 4L8.8 9H6.4V14.8H2.6V9H0.2z" fill="#38d838"/><path d="M4.5 5L6.8 8.2H5.4V14H3.6V8.2H2.2z" fill="#68f068"/></svg>
<div class="a" style="left:988.6px;top:317.1px;width:0.6px;height:23px;background:#eceef2"></div>
<div class="a" style="left:1025px;top:317.1px;width:0.6px;height:23px;background:#eceef2"></div>
<div class="a" style="left:1098.6px;top:317.1px;width:0.6px;height:23px;background:#eceef2"></div>
<div class="a" style="left:1135.2px;top:317.1px;width:0.6px;height:23px;background:#eceef2"></div>
<div class="a" style="left:1171.5px;top:317.1px;width:0.6px;height:23px;background:#eceef2"></div>
<div class="a" style="left:1263.7px;top:317.1px;width:0.6px;height:23px;background:#eceef2"></div>
<div class="a" style="left:897.5px;top:329.4px;width:366.2px;height:0.6px;background:#f1f2f5"></div>
<div class="a" style="left:897.5px;top:339.9px;width:366.2px;height:0.6px;background:#f1f2f5"></div>
<div class="a" style="left:1025.5px;top:329.7px;width:238.2px;height:9.8px;background:#c8f2c8"></div>
<div class="t" style="left:900.6px;top:320.50px;font-size:6.9px;line-height:6.9px;color:#222;">Patient</div>
<div class="t" style="left:987.5px;width:40px;text-align:center;top:320.50px;font-size:6.9px;line-height:6.9px;color:#222">Zeit</div>
<div class="t" style="left:1028.5px;top:320.50px;font-size:6.9px;line-height:6.9px;color:#222;">Terminart</div>
<div class="t" style="left:1102px;top:320.50px;font-size:6.9px;line-height:6.9px;color:#222;">Stuhl</div>
<div class="t" style="left:1138.5px;top:320.50px;font-size:6.9px;line-height:6.9px;color:#222;">Behand...</div>
<div class="t" style="left:1175px;top:320.50px;font-size:6.9px;line-height:6.9px;color:#222;">Bemerkung</div>
<svg class="a" style="left:899.6px;top:331.6px;" width="8.5" height="6.5" viewBox="0 0 8.5 6.5"><rect x="0.4" y="0.4" width="7.7" height="5.7" rx="0.8" fill="#c8d0b8" stroke="#505848" stroke-width="0.8"/><rect x="1.4" y="1.6" width="3.4000000000000004" height="3.3" fill="#e0b818"/><rect x="4.675000000000001" y="1.4" width="2.9749999999999996" height="3.7" fill="#f4fff0" stroke="#40c040" stroke-width="0.5"/><rect x="4.675000000000001" y="1.2" width="2.9749999999999996" height="1" fill="#30d030"/></svg>
<div class="t" style="left:909.1px;top:332.60px;font-size:6.9px;line-height:6.9px;color:#161616;">Schneider, Sebastian</div>
<div class="t" style="left:987.5px;width:40px;text-align:center;top:332.60px;font-size:6.9px;line-height:6.9px;color:#161616">00:13</div>
<div class="t" style="left:1028.5px;top:332.60px;font-size:6.9px;line-height:6.9px;color:#161616;">F Separieren</div>
<div class="t" style="left:1102px;top:332.60px;font-size:6.9px;line-height:6.9px;color:#161616;">Zimmer...</div>
<div class="t" style="left:1138.5px;top:332.60px;font-size:6.9px;line-height:6.9px;color:#161616;"></div>
<div class="t" style="left:1175px;top:332.60px;font-size:6.9px;line-height:6.9px;color:#161616;">(14:39) 41 min zu früh</div>
<div class="a" style="left:900px;top:392.8px;width:359.2px;height:16.5px;background:#c8c7e3"></div>
<div class="a" style="left:1259.2px;top:392.8px;width:10px;height:16.5px;background:#f6f8fa"></div>
<div class="a" style="left:900px;top:409.3px;width:369.2px;height:25px;background:#fff;box-shadow:0 0 0 0.8px #a8b0bc"></div>
<div class="t" style="left:905.5px;top:394.56px;font-size:7.3px;line-height:7.3px;color:#111;font-weight:bold;">Röntgen</div>
<svg class="a" style="left:1259.7px;top:394.3px;" width="9" height="15" viewBox="0 0 9 15"><rect x="0.2" y="0" width="8.6" height="3.4" rx="0.8" fill="#20c820"/><rect x="1.8" y="1.2" width="5.4" height="1" fill="#80e880"/><path d="M4.5 4L8.8 9H6.4V14.8H2.6V9H0.2z" fill="#38d838"/><path d="M4.5 5L6.8 8.2H5.4V14H3.6V8.2H2.2z" fill="#68f068"/></svg>
<div class="a" style="left:990.5px;top:410.3px;width:0.6px;height:23px;background:#eceef2"></div>
<div class="a" style="left:1027px;top:410.3px;width:0.6px;height:23px;background:#eceef2"></div>
<div class="a" style="left:1098px;top:410.3px;width:0.6px;height:23px;background:#eceef2"></div>
<div class="a" style="left:1134.5px;top:410.3px;width:0.6px;height:23px;background:#eceef2"></div>
<div class="a" style="left:1170.5px;top:410.3px;width:0.6px;height:23px;background:#eceef2"></div>
<div class="a" style="left:1259px;top:410.3px;width:0.6px;height:23px;background:#eceef2"></div>
<div class="a" style="left:901px;top:422.6px;width:358px;height:0.6px;background:#f1f2f5"></div>
<div class="a" style="left:901px;top:433.1px;width:358px;height:0.6px;background:#f1f2f5"></div>
<div class="a" style="left:1027.5px;top:422.9px;width:231.5px;height:9.8px;background:#68e468"></div>
<div class="t" style="left:904.2px;top:413.70px;font-size:6.9px;line-height:6.9px;color:#222;">Patient</div>
<div class="t" style="left:988.5px;width:40px;text-align:center;top:413.70px;font-size:6.9px;line-height:6.9px;color:#222">Zeit</div>
<div class="t" style="left:1030px;top:413.70px;font-size:6.9px;line-height:6.9px;color:#222;">Terminart</div>
<div class="t" style="left:1101.4px;top:413.70px;font-size:6.9px;line-height:6.9px;color:#222;">Stuhl</div>
<div class="t" style="left:1137.7px;top:413.70px;font-size:6.9px;line-height:6.9px;color:#222;">Behand...</div>
<div class="t" style="left:1173.7px;top:413.70px;font-size:6.9px;line-height:6.9px;color:#222;">Bemerkung</div>
<svg class="a" style="left:903.2px;top:424.8px;" width="8.5" height="6.5" viewBox="0 0 8.5 6.5"><rect x="0.4" y="0.4" width="7.7" height="5.7" rx="0.8" fill="#c8d0b8" stroke="#505848" stroke-width="0.8"/><rect x="1.4" y="1.6" width="3.4000000000000004" height="3.3" fill="#e0b818"/><rect x="4.675000000000001" y="1.4" width="2.9749999999999996" height="3.7" fill="#f4fff0" stroke="#40c040" stroke-width="0.5"/><rect x="4.675000000000001" y="1.2" width="2.9749999999999996" height="1" fill="#30d030"/></svg>
<div class="t" style="left:912.7px;top:425.80px;font-size:6.9px;line-height:6.9px;color:#3e7a42;">Beutlin, Mia</div>
<div class="t" style="left:988.5px;width:40px;text-align:center;top:425.80px;font-size:6.9px;line-height:6.9px;color:#3e7a42">00:13</div>
<div class="t" style="left:1030px;top:425.80px;font-size:6.9px;line-height:6.9px;color:#3e7a42;">Bogenwechsel</div>
<div class="t" style="left:1101.4px;top:425.80px;font-size:6.9px;line-height:6.9px;color:#3e7a42;">Zimmer...</div>
<div class="t" style="left:1137.7px;top:425.80px;font-size:6.9px;line-height:6.9px;color:#3e7a42;"></div>
<div class="t" style="left:1173.7px;top:425.80px;font-size:6.9px;line-height:6.9px;color:#3e7a42;">(14:39) 61 min zu früh</div>
<div class="a" style="left:901.2px;top:487.2px;width:358.8px;height:16.2px;background:#c8c7e3"></div>
<div class="a" style="left:1260px;top:487.2px;width:10px;height:16.2px;background:#f6f8fa"></div>
<div class="a" style="left:901.2px;top:503.4px;width:368.8px;height:25px;background:#fff;box-shadow:0 0 0 0.8px #a8b0bc"></div>
<div class="t" style="left:906.7px;top:488.81px;font-size:7.3px;line-height:7.3px;color:#111;font-weight:bold;">Abrechnung</div>
<svg class="a" style="left:1260.5px;top:488.4px;" width="9" height="15" viewBox="0 0 9 15"><rect x="0.2" y="0" width="8.6" height="3.4" rx="0.8" fill="#20c820"/><rect x="1.8" y="1.2" width="5.4" height="1" fill="#80e880"/><path d="M4.5 4L8.8 9H6.4V14.8H2.6V9H0.2z" fill="#38d838"/><path d="M4.5 5L6.8 8.2H5.4V14H3.6V8.2H2.2z" fill="#68f068"/></svg>
<div class="a" style="left:991px;top:504.4px;width:0.6px;height:23px;background:#eceef2"></div>
<div class="a" style="left:1027.7px;top:504.4px;width:0.6px;height:23px;background:#eceef2"></div>
<div class="a" style="left:1099px;top:504.4px;width:0.6px;height:23px;background:#eceef2"></div>
<div class="a" style="left:1135.5px;top:504.4px;width:0.6px;height:23px;background:#eceef2"></div>
<div class="a" style="left:1171px;top:504.4px;width:0.6px;height:23px;background:#eceef2"></div>
<div class="a" style="left:1260px;top:504.4px;width:0.6px;height:23px;background:#eceef2"></div>
<div class="a" style="left:902.2px;top:516.7px;width:357.8px;height:0.6px;background:#f1f2f5"></div>
<div class="a" style="left:902.2px;top:527.2px;width:357.8px;height:0.6px;background:#f1f2f5"></div>
<div class="a" style="left:1028.2px;top:517px;width:231.8px;height:9.8px;background:#f8daf6"></div>
<div class="t" style="left:904.75px;top:507.80px;font-size:6.9px;line-height:6.9px;color:#222;">Patient</div>
<div class="t" style="left:989.5px;width:40px;text-align:center;top:507.80px;font-size:6.9px;line-height:6.9px;color:#222">Zeit</div>
<div class="t" style="left:1030.7px;top:507.80px;font-size:6.9px;line-height:6.9px;color:#222;">Terminart</div>
<div class="t" style="left:1102.2px;top:507.80px;font-size:6.9px;line-height:6.9px;color:#222;">Stuhl</div>
<div class="t" style="left:1138px;top:507.80px;font-size:6.9px;line-height:6.9px;color:#222;">Behand...</div>
<div class="t" style="left:1174.3px;top:507.80px;font-size:6.9px;line-height:6.9px;color:#222;">Bemerkung</div>
<svg class="a" style="left:903.75px;top:518.9px;" width="8.5" height="6.5" viewBox="0 0 8.5 6.5"><rect x="0.4" y="0.4" width="7.7" height="5.7" rx="0.8" fill="#c8d0b8" stroke="#505848" stroke-width="0.8"/><rect x="1.4" y="1.6" width="3.4000000000000004" height="3.3" fill="#e0b818"/><rect x="4.675000000000001" y="1.4" width="2.9749999999999996" height="3.7" fill="#f4fff0" stroke="#40c040" stroke-width="0.5"/><rect x="4.675000000000001" y="1.2" width="2.9749999999999996" height="1" fill="#30d030"/></svg>
<div class="t" style="left:913.25px;top:519.90px;font-size:6.9px;line-height:6.9px;color:#3e7a42;">Müller, Leo</div>
<div class="t" style="left:989.5px;width:40px;text-align:center;top:519.90px;font-size:6.9px;line-height:6.9px;color:#3e7a42">00:12</div>
<div class="t" style="left:1030.7px;top:519.90px;font-size:6.9px;line-height:6.9px;color:#707870;">Beratung</div>
<div class="t" style="left:1102.2px;top:519.90px;font-size:6.9px;line-height:6.9px;color:#707870;">Zimmer...</div>
<div class="t" style="left:1138px;top:519.90px;font-size:6.9px;line-height:6.9px;color:#707870;"></div>
<div class="t" style="left:1174.3px;top:519.90px;font-size:6.9px;line-height:6.9px;color:#707870;">(14:40) 40 min zu spät</div>
</div></div>
</body></html>
